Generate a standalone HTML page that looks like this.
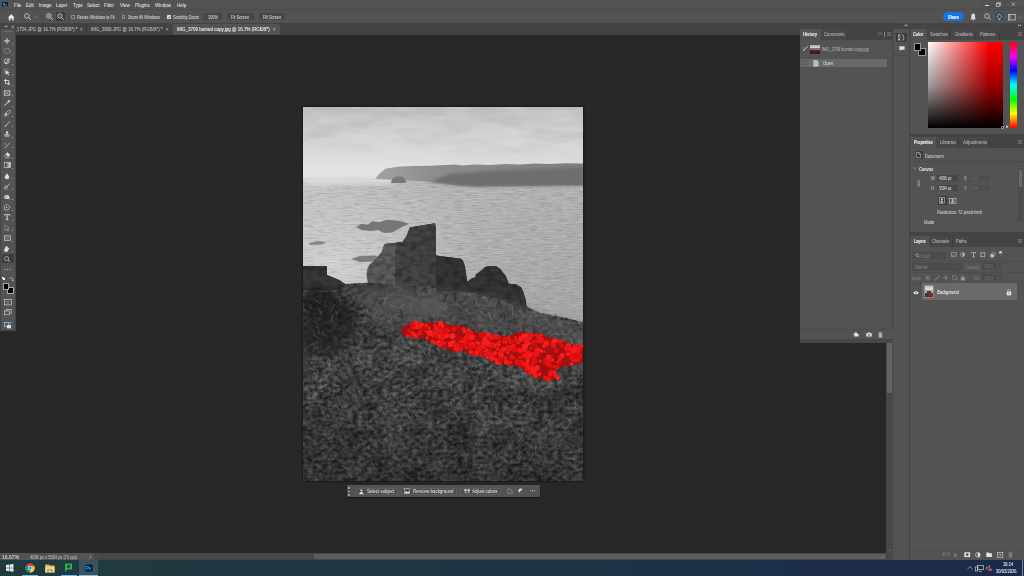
<!DOCTYPE html>
<html><head><meta charset="utf-8">
<style>
*{box-sizing:border-box;margin:0;padding:0}
html,body{width:1024px;height:576px;overflow:hidden;background:#282828;font-family:"Liberation Sans",sans-serif;color:#d6d6d6}
.a{position:absolute}
.t{position:absolute;white-space:nowrap}
svg{position:absolute;overflow:visible}
</style></head><body>
<div class="a" style="left:0px;top:0px;width:1024px;height:8.7px;background:#535353;"></div>
<div class="a" style="left:0px;top:8.7px;width:1024px;height:1px;background:#4a4a4a;"></div>
<div class="a" style="left:2px;top:2px;width:6.2px;height:5.4px;background:#001e36;border-radius:1px"></div>
<div class="t" style="left:2.9px;top:3px;font-size:4.42px;line-height:5.08px;color:#31a8ff;font-weight:bold;transform:scaleX(0.7466);transform-origin:0 0;-webkit-text-stroke:0.08px #31a8ff;">Ps</div>
<div class="t" style="left:13.75px;top:2px;font-size:5.23px;line-height:6.01px;color:#dedede;transform:scaleX(0.8700);transform-origin:0 0;-webkit-text-stroke:0.08px #dedede;">File</div>
<div class="t" style="left:25.75px;top:2px;font-size:5.23px;line-height:6.01px;color:#dedede;transform:scaleX(0.8700);transform-origin:0 0;-webkit-text-stroke:0.08px #dedede;">Edit</div>
<div class="t" style="left:38.75px;top:2px;font-size:5.23px;line-height:6.01px;color:#dedede;transform:scaleX(0.8700);transform-origin:0 0;-webkit-text-stroke:0.08px #dedede;">Image</div>
<div class="t" style="left:56.45px;top:2px;font-size:5.23px;line-height:6.01px;color:#dedede;transform:scaleX(0.8700);transform-origin:0 0;-webkit-text-stroke:0.08px #dedede;">Layer</div>
<div class="t" style="left:72.55px;top:2px;font-size:5.23px;line-height:6.01px;color:#dedede;transform:scaleX(0.8700);transform-origin:0 0;-webkit-text-stroke:0.08px #dedede;">Type</div>
<div class="t" style="left:87.25px;top:2px;font-size:5.23px;line-height:6.01px;color:#dedede;transform:scaleX(0.8700);transform-origin:0 0;-webkit-text-stroke:0.08px #dedede;">Select</div>
<div class="t" style="left:104.25px;top:2px;font-size:5.23px;line-height:6.01px;color:#dedede;transform:scaleX(0.8700);transform-origin:0 0;-webkit-text-stroke:0.08px #dedede;">Filter</div>
<div class="t" style="left:119.55px;top:2px;font-size:5.23px;line-height:6.01px;color:#dedede;transform:scaleX(0.8700);transform-origin:0 0;-webkit-text-stroke:0.08px #dedede;">View</div>
<div class="t" style="left:134.55px;top:2px;font-size:5.23px;line-height:6.01px;color:#dedede;transform:scaleX(0.8700);transform-origin:0 0;-webkit-text-stroke:0.08px #dedede;">Plugins</div>
<div class="t" style="left:154.55px;top:2px;font-size:5.23px;line-height:6.01px;color:#dedede;transform:scaleX(0.8700);transform-origin:0 0;-webkit-text-stroke:0.08px #dedede;">Window</div>
<div class="t" style="left:176.75px;top:2px;font-size:5.23px;line-height:6.01px;color:#dedede;transform:scaleX(0.8700);transform-origin:0 0;-webkit-text-stroke:0.08px #dedede;">Help</div>
<div class="a" style="left:981.5px;top:0px;width:0.6px;height:7.6px;background:#4c4c4c;"></div>
<div class="a" style="left:992.5px;top:0px;width:0.6px;height:7.6px;background:#4c4c4c;"></div>
<div class="a" style="left:1003.5px;top:0px;width:0.6px;height:7.6px;background:#4c4c4c;"></div>
<div class="a" style="left:981.5px;top:7px;width:41px;height:0.6px;background:#4c4c4c;"></div>
<div class="a" style="left:985px;top:4.6px;width:4px;height:0.8px;background:#ddd;"></div>
<svg style="left:996px;top:1.8px" width="6" height="5" viewBox="0 0 6 5"><rect x="0.6" y="1.6" width="3" height="3" fill="none" stroke="#ddd" stroke-width="0.6"/><path d="M1.6 1.6V0.6H4.6V3.6H3.6" fill="none" stroke="#ddd" stroke-width="0.6"/></svg>
<svg style="left:1011.2px;top:2px" width="5" height="5" viewBox="0 0 5 5"><path d="M0.5 0.5L4 4M4 0.5L0.5 4" stroke="#ddd" stroke-width="0.6"/></svg>
<div class="a" style="left:0px;top:9.7px;width:1024px;height:13.3px;background:#535353;"></div>
<svg style="left:7.9px;top:13.5px" width="7" height="7" viewBox="0 0 7 7"><path d="M3.25 0.2L6.6 3.4H5.6V6.5H4.1V4.5H2.4V6.5H0.9V3.4H-0.1Z" fill="#ececec"/></svg>
<div class="a" style="left:21.5px;top:10.7px;width:0.7px;height:11px;background:#4a4a4a;"></div>
<div class="a" style="left:41.5px;top:10.7px;width:0.7px;height:11px;background:#4a4a4a;"></div>
<div class="a" style="left:67.5px;top:10.7px;width:0.7px;height:11px;background:#4a4a4a;"></div>
<svg style="left:24px;top:13px" width="8" height="8" viewBox="0 0 8 8"><circle cx="2.9" cy="2.9" r="2.3" fill="none" stroke="#dcdcdc" stroke-width="0.75"/><path d="M4.5 4.5L6.8 6.8" stroke="#dcdcdc" stroke-width="0.9"/></svg>
<svg style="left:34.8px;top:16px" width="4" height="3" viewBox="0 0 4 3"><path d="M0.3 0.4L1.7 1.8L3.1 0.4" fill="none" stroke="#aaa" stroke-width="0.5"/></svg>
<svg style="left:46px;top:13px" width="8" height="8" viewBox="0 0 8 8"><circle cx="2.9" cy="2.9" r="2.3" fill="none" stroke="#dcdcdc" stroke-width="0.75"/><path d="M4.5 4.5L6.8 6.8" stroke="#dcdcdc" stroke-width="0.9"/><path d="M1.7 2.9H4.1M2.9 1.7V4.1" stroke="#dcdcdc" stroke-width="0.5"/></svg>
<div class="a" style="left:56.1px;top:12px;width:8.8px;height:9.2px;background:#3b3b3b;border-radius:1px"></div>
<svg style="left:57px;top:13px" width="8" height="8" viewBox="0 0 8 8"><circle cx="2.9" cy="2.9" r="2.3" fill="none" stroke="#dcdcdc" stroke-width="0.75"/><path d="M4.5 4.5L6.8 6.8" stroke="#dcdcdc" stroke-width="0.9"/><path d="M1.7 2.9H4.1" stroke="#dcdcdc" stroke-width="0.5"/></svg>
<div class="a" style="left:71.4px;top:14.8px;width:3.8px;height:3.8px;background:transparent;border:0.55px solid #8c8c8c;border-radius:0.6px"></div>
<div class="t" style="left:77px;top:15px;font-size:4.42px;line-height:5.08px;color:#cfcfcf;transform:scaleX(0.8643);transform-origin:0 0;-webkit-text-stroke:0.08px #cfcfcf;">Resize Windows to Fit</div>
<div class="a" style="left:121.6px;top:14.8px;width:3.8px;height:3.8px;background:transparent;border:0.55px solid #8c8c8c;border-radius:0.6px"></div>
<div class="t" style="left:128px;top:15px;font-size:4.46px;line-height:5.13px;color:#cfcfcf;transform:scaleX(0.8700);transform-origin:0 0;-webkit-text-stroke:0.08px #cfcfcf;">Zoom All Windows</div>
<div class="a" style="left:166.9px;top:14.6px;width:4.2px;height:4.2px;background:#e4e4e4;border-radius:0.6px"></div>
<svg style="left:166.9px;top:14.6px" width="5" height="5" viewBox="0 0 5 5"><path d="M0.9 2.2L1.9 3.2L3.4 1.1" fill="none" stroke="#3a3a3a" stroke-width="0.65"/></svg>
<div class="t" style="left:173px;top:15px;font-size:4.6px;line-height:5.29px;color:#cfcfcf;transform:scaleX(0.8696);transform-origin:0 0;-webkit-text-stroke:0.08px #cfcfcf;">Scrubby Zoom</div>
<div class="a" style="left:203.4px;top:12.8px;width:18.400000000000006px;height:7.3px;background:#474747;border-radius:1px"></div>
<div class="t" style="left:208.2px;top:15px;font-size:4.45px;line-height:5.12px;color:#cfcfcf;transform:scaleX(0.8697);transform-origin:0 0;-webkit-text-stroke:0.08px #cfcfcf;">100%</div>
<div class="a" style="left:227px;top:12.8px;width:26.69999999999999px;height:7.3px;background:#474747;border-radius:1px"></div>
<div class="t" style="left:231.1px;top:15px;font-size:4.57px;line-height:5.26px;color:#cfcfcf;transform:scaleX(0.8687);transform-origin:0 0;-webkit-text-stroke:0.08px #cfcfcf;">Fit Screen</div>
<div class="a" style="left:258.5px;top:12.8px;width:26.30000000000001px;height:7.3px;background:#474747;border-radius:1px"></div>
<div class="t" style="left:262.9px;top:15px;font-size:4.42px;line-height:5.08px;color:#cfcfcf;transform:scaleX(0.8665);transform-origin:0 0;-webkit-text-stroke:0.08px #cfcfcf;">Fill Screen</div>
<div class="a" style="left:943.1px;top:11.7px;width:21.3px;height:9.6px;background:#1473e6;border-radius:4.8px"></div>
<div class="t" style="left:948.2px;top:15px;font-size:4.55px;line-height:5.23px;color:#ffffff;font-weight:bold;transform:scaleX(0.8703);transform-origin:0 0;-webkit-text-stroke:0.08px #ffffff;">Share</div>
<svg style="left:970.3px;top:12.6px" width="7" height="8" viewBox="0 0 7 8"><path d="M3.2 0.4C1.9 0.4 1.3 1.5 1.3 2.8V4.9L0.2 6.2H6.2L5.1 4.9V2.8C5.1 1.5 4.5 0.4 3.2 0.4Z" fill="#dadada"/><circle cx="3.2" cy="6.8" r="0.8" fill="#dadada"/></svg>
<svg style="left:983.8px;top:13.1px" width="8" height="8" viewBox="0 0 8 8"><circle cx="3" cy="3" r="2.3" fill="none" stroke="#dadada" stroke-width="0.7"/><path d="M4.7 4.7L6.6 6.6" stroke="#dadada" stroke-width="0.8"/></svg>
<div class="a" style="left:994px;top:11.2px;width:10.8px;height:10.8px;background:#404040;border:1px solid #2566c4;border-radius:50%"></div>
<svg style="left:996px;top:12.8px" width="7" height="8" viewBox="0 0 7 8"><path d="M3.4 1.6C2.2 1.6 1.5 2.5 1.5 3.4C1.5 4.2 2.1 4.7 2.5 5.2V6H4.3V5.2C4.7 4.7 5.3 4.2 5.3 3.4C5.3 2.5 4.6 1.6 3.4 1.6Z" fill="none" stroke="#ececec" stroke-width="0.55"/><path d="M2.6 6.5H4.2V7.2H2.6Z" fill="#ececec"/><path d="M3.4 0.2V1M0.9 1.1L1.4 1.6M5.9 1.1L5.4 1.6M0.1 3.4H0.8M6.7 3.4H6" stroke="#ececec" stroke-width="0.45"/></svg>
<svg style="left:1007.5px;top:13.8px" width="8" height="7" viewBox="0 0 8 7"><rect x="0.4" y="0.4" width="6.8" height="5.6" fill="none" stroke="#dadada" stroke-width="0.7"/><rect x="0.8" y="0.8" width="2" height="4.8" fill="#8a8a8a"/></svg>
<svg style="left:1018.6px;top:15.6px" width="4" height="3" viewBox="0 0 4 3"><path d="M0.3 0.4L1.7 1.8L3.1 0.4" fill="none" stroke="#9a9a9a" stroke-width="0.5"/></svg>
<div class="a" style="left:16px;top:23px;width:1008px;height:12px;background:#434343;"></div>
<div class="a" style="left:16px;top:23px;width:70px;height:12px;overflow:hidden">
<div class="t" style="left:-10.46px;top:4px;font-size:5.06px;line-height:5.82px;color:#bcbcbc;transform:scaleX(0.8696);transform-origin:0 0;-webkit-text-stroke:0.08px #bcbcbc;">IMG_1734.JPG @ 16.7% (RGB/8*) *</div>
</div>
<div class="t" style="left:79.6px;top:27px;font-size:5.06px;line-height:5.82px;color:#a0a0a0;transform:scaleX(0.8696);transform-origin:0 0;-webkit-text-stroke:0.08px #a0a0a0;">×</div>
<div class="a" style="left:86.3px;top:23.5px;width:0.7px;height:11.5px;background:#3a3a3a;"></div>
<div class="t" style="left:90.8px;top:27px;font-size:5.06px;line-height:5.82px;color:#bcbcbc;transform:scaleX(0.8696);transform-origin:0 0;-webkit-text-stroke:0.08px #bcbcbc;">IMG_3880.JPG @ 16.7% (RGB/8*) *</div>
<div class="t" style="left:166.2px;top:27px;font-size:5.06px;line-height:5.82px;color:#a0a0a0;transform:scaleX(0.8696);transform-origin:0 0;-webkit-text-stroke:0.08px #a0a0a0;">×</div>
<div class="a" style="left:173.3px;top:23.5px;width:106.7px;height:11.5px;background:#535353;"></div>
<div class="t" style="left:177.1px;top:27px;font-size:5.14px;line-height:5.91px;color:#f2f2f2;transform:scaleX(0.8735);transform-origin:0 0;-webkit-text-stroke:0.08px #f2f2f2;">IMG_3709 burned copy.jpg @ 16.7% (RGB/8*)</div>
<div class="t" style="left:273.4px;top:27px;font-size:5.06px;line-height:5.82px;color:#a8a8a8;transform:scaleX(0.8696);transform-origin:0 0;-webkit-text-stroke:0.08px #a8a8a8;">×</div>
<div class="a" style="left:0px;top:23px;width:16px;height:6px;background:#434343;"></div>
<svg style="left:3.8px;top:24.6px" width="4" height="3" viewBox="0 0 4 3"><path d="M1.6 0.2L0.2 1.4L1.6 2.6ZM3.4 0.2L2 1.4L3.4 2.6Z" fill="#c4c4c4"/></svg>
<svg style="left:10.8px;top:24.8px" width="4" height="4" viewBox="0 0 4 4"><path d="M0.4 0.4L3.2 3.2M3.2 0.4L0.4 3.2" stroke="#cfcfcf" stroke-width="0.6"/></svg>
<div class="a" style="left:0px;top:29px;width:16px;height:302px;background:#535353;border-left:1.2px solid #454545;border-right:0.8px solid #454545;border-bottom:0.8px solid #454545"></div>
<div class="a" style="left:4px;top:30.8px;width:8px;height:0.6px;background:#6a6a6a;"></div>
<svg style="left:4.4px;top:37.5px" width="7" height="7" viewBox="0 0 7 7"><path d="M3 0L4 1.3H3.4V2.6H4.7V2L6 3L4.7 4V3.4H3.4V4.7H4L3 6L2 4.7H2.6V3.4H1.3V4L0 3L1.3 2V2.6H2.6V1.3H2Z" fill="#dedede"/></svg>
<div class="a" style="left:12px;top:43.1px;width:0.8px;height:0.8px;background:#9a9a9a;"></div>
<svg style="left:4.4px;top:47.9px" width="7" height="7" viewBox="0 0 7 7"><ellipse cx="3" cy="3" rx="3.2" ry="2.4" fill="none" stroke="#dedede" stroke-width="0.6" stroke-dasharray="0.9 0.5"/></svg>
<div class="a" style="left:12px;top:53.5px;width:0.8px;height:0.8px;background:#9a9a9a;"></div>
<svg style="left:4.4px;top:58.3px" width="7" height="7" viewBox="0 0 7 7"><circle cx="2.6" cy="3.4" r="2.4" fill="none" stroke="#dedede" stroke-width="0.7"/><path d="M1.5 5.5L5.8 0.3" stroke="#dedede" stroke-width="0.9"/><path d="M0.6 4 A2.4 2.4 0 0 0 3.5 5.6Z" fill="#dedede"/></svg>
<div class="a" style="left:12px;top:63.9px;width:0.8px;height:0.8px;background:#9a9a9a;"></div>
<svg style="left:4.4px;top:68.7px" width="7" height="7" viewBox="0 0 7 7"><rect x="0" y="0" width="4" height="4" fill="none" stroke="#9a9a9a" stroke-width="0.5"/><path d="M1.2 1.2L5.8 3.6L3.8 4.1L5.4 6L4.6 6.4L3.2 4.5L1.9 5.8Z" fill="#dedede"/></svg>
<div class="a" style="left:12px;top:74.3px;width:0.8px;height:0.8px;background:#9a9a9a;"></div>
<svg style="left:4.4px;top:79.1px" width="7" height="7" viewBox="0 0 7 7"><path d="M1.5 0V4.7H6M0 1.5H4.7V6" fill="none" stroke="#dedede" stroke-width="0.9"/></svg>
<div class="a" style="left:12px;top:84.7px;width:0.8px;height:0.8px;background:#9a9a9a;"></div>
<svg style="left:4.4px;top:89.5px" width="7" height="7" viewBox="0 0 7 7"><rect x="0.3" y="0.8" width="5.6" height="4.4" fill="none" stroke="#dedede" stroke-width="0.7"/><path d="M0.3 0.8L5.9 5.2M5.9 0.8L0.3 5.2" stroke="#dedede" stroke-width="0.5"/></svg>
<div class="a" style="left:12px;top:95.1px;width:0.8px;height:0.8px;background:#9a9a9a;"></div>
<svg style="left:4.4px;top:99.9px" width="7" height="7" viewBox="0 0 7 7"><path d="M0.6 5.6L4.2 2" stroke="#dedede" stroke-width="1"/><path d="M3.4 1.6L4.6 0.4C5 0 5.6 0 5.9 0.3C6.2 0.6 6.2 1.2 5.8 1.6L4.6 2.8Z" fill="#dedede"/></svg>
<div class="a" style="left:12px;top:105.5px;width:0.8px;height:0.8px;background:#9a9a9a;"></div>
<svg style="left:4.4px;top:110.3px" width="7" height="7" viewBox="0 0 7 7"><path d="M0.7 4.3L4.3 0.7C4.8 0.2 5.6 0.2 6 0.7C6.4 1.1 6.4 1.9 5.9 2.4L2.4 5.9C1.9 6.4 1.1 6.4 0.7 6C0.2 5.6 0.2 4.8 0.7 4.3Z" fill="none" stroke="#dedede" stroke-width="0.6"/><path d="M0.9 4.6L2.4 3.1L3.3 4L1.8 5.5Z" fill="#dedede"/></svg>
<div class="a" style="left:12px;top:115.9px;width:0.8px;height:0.8px;background:#9a9a9a;"></div>
<svg style="left:4.4px;top:120.7px" width="7" height="7" viewBox="0 0 7 7"><path d="M0.5 5.8C0.6 4.9 1 4.6 1.6 4.6L5.8 0.2L6.2 0.6L2 5C2 5.6 1.6 6 0.5 5.8Z" fill="#dedede"/></svg>
<div class="a" style="left:12px;top:126.3px;width:0.8px;height:0.8px;background:#9a9a9a;"></div>
<svg style="left:4.4px;top:131.1px" width="7" height="7" viewBox="0 0 7 7"><circle cx="3" cy="1.4" r="1.2" fill="#dedede"/><path d="M2.5 2.4H3.5V3.4H5.8V4.6H0.2V3.4H2.5Z M0.6 5.2H5.4V5.8H0.6Z" fill="#dedede"/></svg>
<div class="a" style="left:12px;top:136.7px;width:0.8px;height:0.8px;background:#9a9a9a;"></div>
<svg style="left:4.4px;top:141.5px" width="7" height="7" viewBox="0 0 7 7"><path d="M0.8 5.8C0.9 5 1.2 4.7 1.8 4.7L5.6 0.4L6 0.8L2.2 5.1C2.2 5.6 1.8 6 0.8 5.8Z" fill="#dedede"/><path d="M0.3 1.5L2 2.3" stroke="#dedede" stroke-width="0.6"/></svg>
<div class="a" style="left:12px;top:147.1px;width:0.8px;height:0.8px;background:#9a9a9a;"></div>
<svg style="left:4.4px;top:151.9px" width="7" height="7" viewBox="0 0 7 7"><path d="M3.5 0.6L5.8 2.9L3 5.7H1.6L0.3 4.4Z" fill="none" stroke="#dedede" stroke-width="0.6"/><path d="M3.5 0.6L5.8 2.9L4 4.7L1.7 2.4Z" fill="#dedede"/><path d="M3 5.7H6" stroke="#dedede" stroke-width="0.5"/></svg>
<div class="a" style="left:12px;top:157.5px;width:0.8px;height:0.8px;background:#9a9a9a;"></div>
<svg style="left:4.4px;top:162.3px" width="7" height="7" viewBox="0 0 7 7"><defs><linearGradient id="gg"><stop offset="0" stop-color="#222"/><stop offset="1" stop-color="#ddd"/></linearGradient></defs><rect x="0.3" y="0.6" width="6" height="4.8" fill="url(#gg)" stroke="#dedede" stroke-width="0.6"/></svg>
<div class="a" style="left:12px;top:167.9px;width:0.8px;height:0.8px;background:#9a9a9a;"></div>
<svg style="left:4.4px;top:172.7px" width="7" height="7" viewBox="0 0 7 7"><path d="M3 0.2C3.6 1.4 5.3 3 5.3 4.2C5.3 5.4 4.3 6.2 3 6.2C1.7 6.2 0.7 5.4 0.7 4.2C0.7 3 2.4 1.4 3 0.2Z" fill="#dedede"/></svg>
<div class="a" style="left:12px;top:178.3px;width:0.8px;height:0.8px;background:#9a9a9a;"></div>
<svg style="left:4.4px;top:183.1px" width="7" height="7" viewBox="0 0 7 7"><path d="M2.2 3.8L5.6 0.4L6 0.8L2.6 4.2Z" fill="#dedede"/><circle cx="2" cy="4.6" r="1.4" fill="none" stroke="#dedede" stroke-width="0.6"/><path d="M0.3 5.2L1.5 4" stroke="#dedede" stroke-width="0.7"/></svg>
<div class="a" style="left:12px;top:188.7px;width:0.8px;height:0.8px;background:#9a9a9a;"></div>
<svg style="left:4.4px;top:193.5px" width="7" height="7" viewBox="0 0 7 7"><ellipse cx="2.8" cy="3" rx="2.7" ry="2" fill="#dedede"/><circle cx="2" cy="2.8" r="0.7" fill="#535353"/><path d="M4 4L6.2 5.2" stroke="#dedede" stroke-width="0.7"/></svg>
<div class="a" style="left:12px;top:199.1px;width:0.8px;height:0.8px;background:#9a9a9a;"></div>
<svg style="left:4.4px;top:203.9px" width="7" height="7" viewBox="0 0 7 7"><path d="M3.2 0.3L5.9 3L4.2 5.9L0.3 5.9L0.3 2L3.2 0.3Z" fill="none" stroke="#dedede" stroke-width="0.6"/><circle cx="2.6" cy="3.4" r="0.6" fill="#dedede"/></svg>
<div class="a" style="left:12px;top:209.5px;width:0.8px;height:0.8px;background:#9a9a9a;"></div>
<svg style="left:4.4px;top:214.3px" width="7" height="7" viewBox="0 0 7 7"><path d="M0.3 0.3H5.9V1.7H5.1V1.1H3.6V5.2H4.3V6H1.9V5.2H2.6V1.1H1.1V1.7H0.3Z" fill="#dedede"/></svg>
<div class="a" style="left:12px;top:219.9px;width:0.8px;height:0.8px;background:#9a9a9a;"></div>
<svg style="left:4.4px;top:224.7px" width="7" height="7" viewBox="0 0 7 7"><path d="M1 0.6L5 3.2L3.2 3.6L4.5 5.6L3.7 6L2.5 4.1L1.3 5.3Z" fill="#1e1e1e" stroke="#dedede" stroke-width="0.5"/></svg>
<div class="a" style="left:12px;top:230.3px;width:0.8px;height:0.8px;background:#9a9a9a;"></div>
<svg style="left:4.4px;top:235.1px" width="7" height="7" viewBox="0 0 7 7"><rect x="0.3" y="0.8" width="6" height="4.6" fill="#6a6a6a" stroke="#dedede" stroke-width="0.6"/></svg>
<div class="a" style="left:12px;top:240.7px;width:0.8px;height:0.8px;background:#9a9a9a;"></div>
<svg style="left:4.4px;top:245.5px" width="7" height="7" viewBox="0 0 7 7"><path d="M1 3.5V1.6C1 1.2 1.7 1.2 1.7 1.6V0.9C1.7 0.5 2.4 0.5 2.4 0.9V0.6C2.4 0.2 3.1 0.2 3.1 0.6V0.9C3.1 0.5 3.8 0.5 3.8 0.9V2.6L4.6 1.9C5 1.6 5.5 2 5.2 2.4L3.8 5C3.4 5.8 2.6 6 2 6C0.8 6 0.3 5.2 0.3 4.2V3C0.3 2.6 1 2.6 1 3Z" fill="#dedede"/></svg>
<div class="a" style="left:12px;top:251.1px;width:0.8px;height:0.8px;background:#9a9a9a;"></div>
<div class="a" style="left:2.2px;top:254.2px;width:11.7px;height:8.7px;background:#3c3c3c;"></div>
<svg style="left:4.4px;top:255.9px" width="7" height="7" viewBox="0 0 7 7"><circle cx="2.6" cy="2.6" r="2.1" fill="none" stroke="#dedede" stroke-width="0.6"/><path d="M4.1 4.1L6 6" stroke="#dedede" stroke-width="0.7"/></svg>
<svg style="left:4px;top:268px" width="8" height="3" viewBox="0 0 8 3"><circle cx="1" cy="1.2" r="0.55" fill="#dedede"/><circle cx="3.5" cy="1.2" r="0.55" fill="#dedede"/><circle cx="6" cy="1.2" r="0.55" fill="#dedede"/></svg>
<div class="a" style="left:1.6px;top:277px;width:2.4px;height:2.4px;background:#111;border:0.4px solid #ddd"></div>
<div class="a" style="left:3px;top:278.4px;width:2px;height:2px;background:#fff;"></div>
<svg style="left:9px;top:276.8px" width="5" height="5" viewBox="0 0 5 5"><path d="M0.5 1H2.5C3.3 1 3.8 1.6 3.8 2.4V4" fill="none" stroke="#dedede" stroke-width="0.6"/><path d="M3 3.3L3.8 4.3L4.6 3.3Z" fill="#dedede"/></svg>
<div class="a" style="left:6.5px;top:287px;width:7px;height:7.3px;background:#000;border:0.6px solid #a8a8a8;border-radius:0.5px"></div>
<div class="a" style="left:2.5px;top:283.3px;width:6.5px;height:6.5px;background:#000;border:0.6px solid #a8a8a8;border-radius:0.5px"></div>
<svg style="left:4px;top:298.8px" width="8" height="7" viewBox="0 0 8 7"><rect x="0.3" y="0.3" width="7" height="5.6" fill="none" stroke="#dedede" stroke-width="0.6"/><circle cx="3.8" cy="3.1" r="1.6" fill="#777"/></svg>
<svg style="left:4px;top:308.5px" width="8" height="7" viewBox="0 0 8 7"><rect x="2.2" y="0.3" width="5" height="3.8" fill="none" stroke="#dedede" stroke-width="0.6"/><rect x="0.3" y="2" width="5" height="3.8" fill="#535353" stroke="#dedede" stroke-width="0.6"/></svg>
<svg style="left:4px;top:320.5px" width="8" height="8" viewBox="0 0 8 8"><rect x="0.5" y="1.5" width="4" height="4" fill="none" stroke="#dedede" stroke-width="0.6"/><rect x="3" y="4" width="4" height="3.4" fill="#dedede"/><circle cx="6.3" cy="1.6" r="1.4" fill="#2d8ceb"/></svg>
<div class="a" style="left:16px;top:35px;width:870px;height:518px;background:#282828;"></div>
<div class="a" style="left:303px;top:107px;width:280px;height:374px;background:#222;box-shadow:0 0 1.5px 0.8px #1a1a1a"></div>
<!-- photo -->
<svg class="a" style="left:303px;top:107px;overflow:hidden" width="280" height="374" viewBox="0 0 280 374">
<defs>
<linearGradient id="sky" x1="0" y1="0" x2="0" y2="1">
<stop offset="0" stop-color="#c0c0c0"/><stop offset="0.2" stop-color="#cdcdcd"/><stop offset="0.5" stop-color="#d8d8d8"/><stop offset="0.85" stop-color="#dfdfdf"/><stop offset="1" stop-color="#dcdcdc"/>
</linearGradient>
<radialGradient id="haze" cx="0.1" cy="0.85" r="0.6">
<stop offset="0" stop-color="#e6e6e6" stop-opacity="0.9"/><stop offset="1" stop-color="#e6e6e6" stop-opacity="0"/>
</radialGradient>
<linearGradient id="sea" x1="0" y1="0" x2="0.4" y2="1">
<stop offset="0" stop-color="#c2c2c2"/><stop offset="0.12" stop-color="#b6b6b6"/><stop offset="0.5" stop-color="#acacac"/><stop offset="1" stop-color="#9e9e9e"/>
</linearGradient>
<radialGradient id="refl" cx="0.1" cy="0.45" r="0.55">
<stop offset="0" stop-color="#dadada" stop-opacity="0.75"/><stop offset="1" stop-color="#dadada" stop-opacity="0"/>
</radialGradient>
<linearGradient id="shade" x1="0" y1="0" x2="0" y2="1">
<stop offset="0" stop-color="#000" stop-opacity="0"/><stop offset="0.3" stop-color="#fff" stop-opacity="0.03"/><stop offset="0.55" stop-color="#000" stop-opacity="0.02"/><stop offset="1" stop-color="#000" stop-opacity="0.2"/>
</linearGradient>
<filter id="grassf" x="0" y="0" width="100%" height="100%" color-interpolation-filters="sRGB">
<feTurbulence type="fractalNoise" baseFrequency="0.2 0.28" numOctaves="3" seed="4"/>
<feColorMatrix type="matrix" values="0.9 0 0 0 -0.2  0.9 0 0 0 -0.2  0.9 0 0 0 -0.2  0 0 0 0 1"/>
</filter>
<filter id="rockf" x="0" y="0" width="100%" height="100%" color-interpolation-filters="sRGB">
<feTurbulence type="fractalNoise" baseFrequency="0.12 0.2" numOctaves="3" seed="12"/>
<feColorMatrix type="matrix" values="0 0 0 0 0  0 0 0 0 0  0 0 0 0 0  1.2 0 0 0 -0.45"/>
</filter>
<filter id="nw" x="0" y="0" width="100%" height="100%" color-interpolation-filters="sRGB">
<feTurbulence type="fractalNoise" baseFrequency="0.12 0.9" numOctaves="2" seed="2"/>
<feColorMatrix type="matrix" values="0 0 0 0 1  0 0 0 0 1  0 0 0 0 1  1.2 0 0 0 -0.55"/>
</filter>
<filter id="nw2" x="0" y="0" width="100%" height="100%" color-interpolation-filters="sRGB">
<feTurbulence type="fractalNoise" baseFrequency="0.08 0.8" numOctaves="2" seed="5"/>
<feColorMatrix type="matrix" values="0 0 0 0 0  0 0 0 0 0  0 0 0 0 0  1.0 0 0 0 -0.5"/>
</filter>
<filter id="nc" x="0" y="0" width="100%" height="100%" color-interpolation-filters="sRGB">
<feTurbulence type="fractalNoise" baseFrequency="0.018 0.08" numOctaves="3" seed="7"/>
<feColorMatrix type="matrix" values="0 0 0 0 0.62  0 0 0 0 0.62  0 0 0 0 0.62  1.6 0 0 0 -0.62"/>
</filter>
<filter id="nc2" x="0" y="0" width="100%" height="100%" color-interpolation-filters="sRGB">
<feTurbulence type="fractalNoise" baseFrequency="0.03 0.12" numOctaves="3" seed="21"/>
<feColorMatrix type="matrix" values="0 0 0 0 0.9  0 0 0 0 0.9  0 0 0 0 0.9  1.5 0 0 0 -0.68"/>
</filter>
<filter id="blotch" x="0" y="0" width="100%" height="100%" color-interpolation-filters="sRGB">
<feTurbulence type="fractalNoise" baseFrequency="0.035 0.05" numOctaves="2" seed="31"/>
<feColorMatrix type="matrix" values="0 0 0 0 0  0 0 0 0 0  0 0 0 0 0  -2.2 0 0 0 1.35"/>
</filter>
<filter id="blotchl" x="0" y="0" width="100%" height="100%" color-interpolation-filters="sRGB">
<feTurbulence type="fractalNoise" baseFrequency="0.03 0.045" numOctaves="2" seed="44"/>
<feColorMatrix type="matrix" values="0 0 0 0 1  0 0 0 0 1  0 0 0 0 1  2.0 0 0 0 -1.1"/>
</filter>
<linearGradient id="headg" x1="0" y1="0" x2="1" y2="0">
<stop offset="0" stop-color="#a2a2a2"/><stop offset="0.3" stop-color="#8c8c8c"/><stop offset="1" stop-color="#7e7e7e"/>
</linearGradient>
<linearGradient id="fadeg" x1="0" y1="0" x2="0" y2="1"><stop offset="0" stop-color="#fff"/><stop offset="0.5" stop-color="#fff"/><stop offset="1" stop-color="#000"/></linearGradient>
<mask id="mfade" maskUnits="userSpaceOnUse" x="0" y="0" width="280" height="60"><rect x="0" y="0" width="280" height="60" fill="url(#fadeg)"/></mask>
<filter id="bl"><feGaussianBlur stdDeviation="0.6"/></filter>
<filter id="bl2"><feGaussianBlur stdDeviation="1.5"/></filter>
<filter id="bl3"><feGaussianBlur stdDeviation="3"/></filter>
<clipPath id="cland"><polygon points="0.0,159.0 24.0,159.0 24.0,168.0 36.0,173.0 42.0,177.0 65.0,175.7 66.0,158.0 70.0,155.0 78.7,145.5 81.8,137.0 99.5,135.0 103.7,128.8 106.8,120.5 124.5,117.4 131.8,116.3 133.0,120.5 133.0,148.6 142.2,149.7 150.5,150.7 160.0,153.8 163.0,166.0 164.0,174.7 172.4,170.5 174.5,166.3 182.8,160.0 191.0,159.0 197.4,162.0 202.6,168.4 205.8,176.8 214.0,177.8 220.3,185.0 223.5,199.7 237.0,206.0 257.0,210.0 280.0,215.0 280.0,374.0 0.0,374.0"/></clipPath>
<clipPath id="crock"><polygon points="92.0,136.0 99.5,135.0 103.7,128.8 106.8,120.5 124.5,117.4 131.8,116.3 133.0,120.5 133.0,179.0 92.0,179.0"/><polygon points="133.0,148.6 142.2,149.7 150.5,150.7 158.0,151.5 160.0,153.8 162.0,159.0 163.0,166.0 164.0,174.7 169.0,171.0 172.4,170.5 173.0,167.0 175.0,166.3 181.0,161.0 182.8,159.5 191.0,159.0 194.0,159.5 197.4,162.0 200.0,167.0 202.6,168.4 204.0,173.0 205.8,176.8 210.0,177.0 214.0,177.8 218.0,180.0 220.3,185.0 223.0,193.0 223.5,199.0 197.0,193.0 167.0,185.0 133.0,183.0"/><polygon points="65.0,175.7 63.5,169.0 64.0,163.0 66.0,158.5 70.0,155.0 75.0,150.0 78.7,145.5 80.0,140.0 81.8,137.0 93.0,136.0 91.0,177.0"/><polygon points="0.0,159.0 24.0,159.0 24.0,168.0 36.0,173.0 42.0,177.0 37.0,183.0 0.0,183.0"/></clipPath>
</defs>
<rect x="0" y="0" width="280" height="80" fill="url(#sky)"/>
<g mask="url(#mfade)"><rect x="0" y="0" width="280" height="60" filter="url(#nc)" opacity="0.45"/>
<rect x="0" y="0" width="280" height="60" filter="url(#nc2)" opacity="0.45"/></g>
<rect x="0" y="20" width="280" height="60" fill="url(#haze)"/>
<rect x="0" y="71" width="280" height="260" fill="url(#sea)"/>
<rect x="0" y="71" width="280" height="200" fill="url(#refl)"/>
<rect x="0" y="71" width="280" height="260" filter="url(#nw)" opacity="0.45"/>
<rect x="0" y="71" width="280" height="260" filter="url(#nw2)" opacity="0.35"/>
<rect x="0" y="68" width="90" height="10" fill="#dedede" filter="url(#bl3)" opacity="0.9"/>
<polygon points="72.0,72.0 77.0,66.0 83.0,61.5 97.0,59.5 112.0,59.0 127.0,58.8 142.0,58.0 152.0,57.6 159.0,58.5 172.0,57.5 187.0,58.0 202.0,57.0 217.0,57.6 232.0,56.5 247.0,57.0 262.0,56.2 280.0,56.5 280.0,78.5 257.0,78.0 217.0,79.0 177.0,79.5 159.0,79.0 142.0,76.5 117.0,74.0 97.0,73.0" fill="url(#headg)" filter="url(#bl)"/>
<polygon points="127.0,75.0 147.0,67.0 197.0,63.0 237.0,62.0 280.0,60.0 280.0,78.5 237.0,79.0 177.0,79.5 159.0,79.0" fill="#6e6e6e" filter="url(#bl2)"/>
<polygon points="88.0,76.0 89.0,72.0 93.0,69.5 99.0,69.5 102.0,72.0 103.0,76.0" fill="#787878" filter="url(#bl)"/>
<polygon points="53.0,120.0 58.0,117.0 65.0,117.5 69.0,114.5 77.0,115.0 83.0,113.0 93.0,113.5 101.0,115.0 106.0,117.0 101.0,119.0 95.0,122.0 89.0,125.5 81.0,126.0 75.0,123.0 67.0,124.0 59.0,123.0" fill="#767676" filter="url(#bl)"/>
<polygon points="48.0,152.0 57.0,149.0 72.0,148.5 78.0,151.0 75.0,154.5 57.0,155.0" fill="#7c7c7c" filter="url(#bl)"/>
<polygon points="6.0,136.0 15.0,134.0 24.0,135.0 19.0,137.5 7.0,138.0" fill="#888" filter="url(#bl)"/>
<g clip-path="url(#cland)">
<rect x="0" y="110" width="280" height="264" filter="url(#grassf)"/>
<rect x="0" y="110" width="280" height="264" fill="#464646" opacity="0.5"/>
<rect x="0" y="170" width="280" height="204" filter="url(#blotch)" opacity="0.35"/>
<rect x="0" y="170" width="280" height="204" filter="url(#blotchl)" opacity="0.12"/>
</g>
<polygon points="92.0,136.0 99.5,135.0 103.7,128.8 106.8,120.5 124.5,117.4 131.8,116.3 133.0,120.5 133.0,179.0 92.0,179.0" fill="#454545"/>
<polygon points="133.0,148.6 142.2,149.7 150.5,150.7 158.0,151.5 160.0,153.8 162.0,159.0 163.0,166.0 164.0,174.7 169.0,171.0 172.4,170.5 173.0,167.0 175.0,166.3 181.0,161.0 182.8,159.5 191.0,159.0 194.0,159.5 197.4,162.0 200.0,167.0 202.6,168.4 204.0,173.0 205.8,176.8 210.0,177.0 214.0,177.8 218.0,180.0 220.3,185.0 223.0,193.0 223.5,199.0 197.0,193.0 167.0,185.0 133.0,183.0" fill="#363636"/>
<polygon points="0.0,159.0 24.0,159.0 24.0,168.0 36.0,173.0 42.0,177.0 37.0,183.0 0.0,183.0" fill="#383838"/>
<polygon points="65.0,175.7 63.5,169.0 64.0,163.0 66.0,158.5 70.0,155.0 75.0,150.0 78.7,145.5 80.0,140.0 81.8,137.0 93.0,136.0 91.0,177.0" fill="#5e5e5e"/>
<g clip-path="url(#crock)"><rect x="0" y="110" width="280" height="90" filter="url(#rockf)" opacity="0.6"/></g>
<polygon points="57.0,185.0 77.0,180.0 137.0,183.0 197.0,191.0 222.0,199.0 242.0,208.0 280.0,217.0 280.0,238.0 237.0,227.0 167.0,221.0 127.0,213.0 97.0,217.0 72.0,215.0 62.0,203.0" fill="#545454" opacity="0.5" filter="url(#bl3)"/>
<polygon points="37.0,181.0 65.0,177.0 92.0,179.0 117.0,180.0 122.0,186.0 97.0,189.0 67.0,190.0 45.0,188.0" fill="#505050" opacity="0.35" filter="url(#bl2)"/>
<polygon points="82.0,193.0 97.0,189.0 127.0,190.0 142.0,195.0 145.0,205.0 127.0,208.0 97.0,206.0 85.0,201.0" fill="#5e5e5e" opacity="0.5" filter="url(#bl2)"/>
<polygon points="0.0,185.0 5.0,180.0 11.0,183.0 15.0,178.0 21.0,184.0 27.0,182.0 32.0,188.0 38.0,189.0 43.0,196.0 49.0,201.0 53.0,211.0 54.0,223.0 49.0,235.0 41.0,243.0 32.0,245.0 22.0,249.0 12.0,248.0 0.0,251.0" fill="#161616" opacity="0.65" filter="url(#bl3)"/>
<g opacity="0.7"><path d="M174.4 327.3Q178.8 325.4 181.3 323.6" stroke="#8a8a8a" stroke-width="0.55" fill="none"/><path d="M235.3 333.4Q231.9 332.4 231.3 331.4" stroke="#6a6a6a" stroke-width="0.55" fill="none"/><path d="M131.3 237.6Q130.0 234.5 132.5 231.5" stroke="#777" stroke-width="0.55" fill="none"/><path d="M114.3 226.0Q114.2 222.0 112.1 218.0" stroke="#8a8a8a" stroke-width="0.55" fill="none"/><path d="M38.9 304.8Q38.6 304.1 35.3 303.5" stroke="#777" stroke-width="0.55" fill="none"/><path d="M216.6 366.8Q214.4 365.4 213.7 364.0" stroke="#777" stroke-width="0.55" fill="none"/><path d="M151.0 315.7Q153.6 314.7 154.7 313.7" stroke="#999" stroke-width="0.55" fill="none"/><path d="M83.7 258.4Q80.4 257.1 80.6 255.8" stroke="#6a6a6a" stroke-width="0.55" fill="none"/><path d="M228.9 299.1Q228.7 296.2 232.1 293.3" stroke="#6a6a6a" stroke-width="0.55" fill="none"/><path d="M229.2 280.0Q229.9 277.6 229.0 275.1" stroke="#8a8a8a" stroke-width="0.55" fill="none"/><path d="M71.7 363.0Q69.9 358.9 68.8 354.8" stroke="#999" stroke-width="0.55" fill="none"/><path d="M102.5 297.7Q99.9 297.0 99.8 296.3" stroke="#777" stroke-width="0.55" fill="none"/><path d="M33.3 237.5Q33.0 233.6 32.6 229.7" stroke="#6a6a6a" stroke-width="0.55" fill="none"/><path d="M217.2 212.6Q221.1 209.8 222.1 207.0" stroke="#8a8a8a" stroke-width="0.55" fill="none"/><path d="M121.2 370.1Q120.8 368.0 121.4 365.8" stroke="#777" stroke-width="0.55" fill="none"/><path d="M95.2 360.3Q93.1 357.5 92.4 354.7" stroke="#777" stroke-width="0.55" fill="none"/><path d="M223.7 306.5Q221.9 303.2 220.4 299.9" stroke="#8a8a8a" stroke-width="0.55" fill="none"/><path d="M22.7 301.7Q19.7 299.9 14.9 298.2" stroke="#6a6a6a" stroke-width="0.55" fill="none"/><path d="M231.4 275.5Q230.6 274.2 226.5 272.9" stroke="#8a8a8a" stroke-width="0.55" fill="none"/><path d="M224.5 253.5Q226.7 252.7 228.4 251.9" stroke="#777" stroke-width="0.55" fill="none"/><path d="M176.5 335.6Q174.8 333.8 175.9 332.0" stroke="#999" stroke-width="0.55" fill="none"/><path d="M82.5 275.0Q87.9 272.1 89.4 269.2" stroke="#999" stroke-width="0.55" fill="none"/><path d="M268.8 317.7Q267.4 315.6 266.3 313.5" stroke="#777" stroke-width="0.55" fill="none"/><path d="M31.5 341.8Q31.1 339.6 27.1 337.4" stroke="#6a6a6a" stroke-width="0.55" fill="none"/><path d="M50.4 282.0Q50.8 279.0 51.1 276.0" stroke="#8a8a8a" stroke-width="0.55" fill="none"/><path d="M220.1 333.3Q222.5 330.0 222.9 326.7" stroke="#6a6a6a" stroke-width="0.55" fill="none"/><path d="M156.6 314.0Q156.4 310.6 152.3 307.2" stroke="#6a6a6a" stroke-width="0.55" fill="none"/><path d="M267.9 254.6Q269.4 253.2 271.0 251.9" stroke="#6a6a6a" stroke-width="0.55" fill="none"/><path d="M91.3 242.5Q91.9 240.2 91.3 237.8" stroke="#6a6a6a" stroke-width="0.55" fill="none"/><path d="M97.4 309.6Q99.5 307.0 102.7 304.4" stroke="#777" stroke-width="0.55" fill="none"/><path d="M243.6 317.6Q247.6 315.6 251.5 313.7" stroke="#777" stroke-width="0.55" fill="none"/><path d="M55.6 258.5Q51.9 255.0 51.5 251.5" stroke="#999" stroke-width="0.55" fill="none"/><path d="M48.1 334.2Q49.1 331.3 50.7 328.3" stroke="#6a6a6a" stroke-width="0.55" fill="none"/><path d="M201.7 198.0Q202.0 196.0 201.1 194.1" stroke="#777" stroke-width="0.55" fill="none"/><path d="M212.5 225.7Q217.8 224.3 219.3 223.0" stroke="#777" stroke-width="0.55" fill="none"/><path d="M15.2 217.2Q12.2 215.4 11.7 213.7" stroke="#8a8a8a" stroke-width="0.55" fill="none"/><path d="M116.3 256.5Q112.1 254.8 110.3 253.1" stroke="#6a6a6a" stroke-width="0.55" fill="none"/><path d="M0.2 266.4Q-1.9 264.1 -0.8 261.8" stroke="#6a6a6a" stroke-width="0.55" fill="none"/><path d="M270.0 292.5Q268.9 290.4 267.7 288.3" stroke="#6a6a6a" stroke-width="0.55" fill="none"/><path d="M268.3 341.2Q270.8 339.2 272.1 337.2" stroke="#6a6a6a" stroke-width="0.55" fill="none"/><path d="M130.9 221.4Q129.5 218.7 130.6 216.1" stroke="#777" stroke-width="0.55" fill="none"/><path d="M170.4 256.6Q164.9 255.1 162.6 253.7" stroke="#777" stroke-width="0.55" fill="none"/><path d="M91.1 351.6Q92.5 348.5 90.0 345.4" stroke="#999" stroke-width="0.55" fill="none"/><path d="M81.6 369.0Q85.7 367.9 86.4 366.7" stroke="#6a6a6a" stroke-width="0.55" fill="none"/><path d="M207.5 247.4Q207.2 246.6 203.3 245.7" stroke="#6a6a6a" stroke-width="0.55" fill="none"/><path d="M137.7 244.8Q135.8 243.1 133.0 241.3" stroke="#999" stroke-width="0.55" fill="none"/><path d="M68.7 200.2Q68.2 198.4 67.7 196.5" stroke="#6a6a6a" stroke-width="0.55" fill="none"/><path d="M68.2 278.8Q69.5 277.2 68.1 275.6" stroke="#6a6a6a" stroke-width="0.55" fill="none"/><path d="M82.1 303.1Q83.5 300.3 84.1 297.6" stroke="#8a8a8a" stroke-width="0.55" fill="none"/><path d="M4.5 215.8Q6.1 213.8 6.8 211.7" stroke="#8a8a8a" stroke-width="0.55" fill="none"/><path d="M130.0 258.3Q129.0 254.7 131.7 251.1" stroke="#6a6a6a" stroke-width="0.55" fill="none"/><path d="M154.9 317.1Q154.5 315.5 156.5 313.8" stroke="#999" stroke-width="0.55" fill="none"/><path d="M217.9 270.4Q220.0 267.6 221.1 264.8" stroke="#999" stroke-width="0.55" fill="none"/><path d="M240.4 345.3Q242.6 342.6 243.0 340.0" stroke="#6a6a6a" stroke-width="0.55" fill="none"/><path d="M130.2 330.2Q129.1 329.4 125.7 328.5" stroke="#6a6a6a" stroke-width="0.55" fill="none"/><path d="M181.6 278.5Q180.6 276.8 178.0 275.2" stroke="#999" stroke-width="0.55" fill="none"/><path d="M272.4 290.4Q270.9 287.6 273.0 284.8" stroke="#777" stroke-width="0.55" fill="none"/><path d="M74.8 208.4Q75.6 207.6 77.8 206.8" stroke="#999" stroke-width="0.55" fill="none"/><path d="M274.0 373.7Q272.2 372.1 267.6 370.4" stroke="#777" stroke-width="0.55" fill="none"/><path d="M172.1 342.2Q175.6 341.2 175.1 340.1" stroke="#999" stroke-width="0.55" fill="none"/><path d="M41.9 303.5Q40.4 301.7 37.9 299.8" stroke="#8a8a8a" stroke-width="0.55" fill="none"/><path d="M155.5 312.5Q153.9 309.3 151.7 306.1" stroke="#8a8a8a" stroke-width="0.55" fill="none"/><path d="M207.9 352.0Q206.8 350.1 207.2 348.2" stroke="#999" stroke-width="0.55" fill="none"/><path d="M137.1 362.9Q135.6 361.7 132.4 360.4" stroke="#777" stroke-width="0.55" fill="none"/><path d="M159.2 315.7Q161.5 314.6 163.4 313.5" stroke="#777" stroke-width="0.55" fill="none"/><path d="M73.7 292.9Q75.1 291.0 76.3 289.2" stroke="#777" stroke-width="0.55" fill="none"/><path d="M226.2 349.3Q224.0 346.5 224.7 343.8" stroke="#8a8a8a" stroke-width="0.55" fill="none"/><path d="M183.4 208.4Q179.0 206.5 177.5 204.6" stroke="#999" stroke-width="0.55" fill="none"/><path d="M66.8 351.7Q66.8 349.1 64.3 346.4" stroke="#8a8a8a" stroke-width="0.55" fill="none"/><path d="M151.8 262.6Q155.1 260.7 158.9 258.8" stroke="#777" stroke-width="0.55" fill="none"/><path d="M209.9 208.2Q208.6 203.9 209.7 199.7" stroke="#999" stroke-width="0.55" fill="none"/><path d="M99.2 235.5Q99.3 233.1 100.6 230.7" stroke="#999" stroke-width="0.55" fill="none"/><path d="M105.9 323.8Q105.2 321.6 103.4 319.3" stroke="#6a6a6a" stroke-width="0.55" fill="none"/><path d="M144.9 300.3Q146.3 297.6 148.5 294.9" stroke="#8a8a8a" stroke-width="0.55" fill="none"/><path d="M10.4 226.7Q12.1 224.6 10.3 222.6" stroke="#6a6a6a" stroke-width="0.55" fill="none"/><path d="M0.1 278.1Q1.0 274.1 2.5 270.1" stroke="#999" stroke-width="0.55" fill="none"/><path d="M129.3 227.7Q127.8 226.0 123.3 224.2" stroke="#999" stroke-width="0.55" fill="none"/><path d="M42.6 239.0Q40.0 237.4 39.2 235.8" stroke="#777" stroke-width="0.55" fill="none"/><path d="M9.3 355.2Q10.0 353.2 12.2 351.1" stroke="#8a8a8a" stroke-width="0.55" fill="none"/><path d="M192.6 315.0Q193.6 313.6 197.7 312.3" stroke="#6a6a6a" stroke-width="0.55" fill="none"/><path d="M81.5 315.1Q77.6 312.6 76.1 310.1" stroke="#8a8a8a" stroke-width="0.55" fill="none"/><path d="M160.9 311.8Q164.6 310.0 166.6 308.2" stroke="#6a6a6a" stroke-width="0.55" fill="none"/><path d="M51.7 258.4Q53.1 257.8 54.8 257.2" stroke="#777" stroke-width="0.55" fill="none"/><path d="M49.2 230.8Q50.5 229.2 50.0 227.6" stroke="#6a6a6a" stroke-width="0.55" fill="none"/><path d="M1.8 204.0Q-0.9 200.3 0.1 196.5" stroke="#6a6a6a" stroke-width="0.55" fill="none"/><path d="M263.1 322.7Q262.9 321.1 266.0 319.4" stroke="#999" stroke-width="0.55" fill="none"/><path d="M15.1 237.1Q12.9 235.5 14.2 233.9" stroke="#6a6a6a" stroke-width="0.55" fill="none"/><path d="M233.4 273.7Q237.9 271.6 238.8 269.5" stroke="#777" stroke-width="0.55" fill="none"/><path d="M50.2 285.1Q48.8 282.4 50.6 279.7" stroke="#6a6a6a" stroke-width="0.55" fill="none"/><path d="M221.4 208.7Q216.4 205.7 214.9 202.7" stroke="#777" stroke-width="0.55" fill="none"/><path d="M175.0 272.9Q175.6 270.3 174.0 267.8" stroke="#777" stroke-width="0.55" fill="none"/><path d="M203.2 358.3Q204.2 355.8 202.6 353.4" stroke="#777" stroke-width="0.55" fill="none"/><path d="M155.3 218.1Q156.2 215.8 159.0 213.5" stroke="#999" stroke-width="0.55" fill="none"/><path d="M87.6 216.5Q84.9 215.1 85.6 213.7" stroke="#999" stroke-width="0.55" fill="none"/><path d="M271.0 313.6Q269.9 311.3 270.9 308.9" stroke="#777" stroke-width="0.55" fill="none"/><path d="M222.9 352.8Q220.4 350.7 215.7 348.6" stroke="#999" stroke-width="0.55" fill="none"/><path d="M210.6 293.7Q213.2 289.8 213.7 285.9" stroke="#8a8a8a" stroke-width="0.55" fill="none"/><path d="M123.8 340.8Q127.8 339.3 130.0 337.8" stroke="#999" stroke-width="0.55" fill="none"/><path d="M75.0 340.0Q71.1 338.3 70.8 336.7" stroke="#777" stroke-width="0.55" fill="none"/><path d="M38.5 283.1Q36.4 282.1 34.0 281.0" stroke="#8a8a8a" stroke-width="0.55" fill="none"/><path d="M7.7 202.2Q8.5 200.4 6.4 198.6" stroke="#8a8a8a" stroke-width="0.55" fill="none"/><path d="M64.7 270.6Q61.7 268.3 62.6 265.9" stroke="#777" stroke-width="0.55" fill="none"/><path d="M203.5 210.2Q202.1 208.1 199.1 206.0" stroke="#999" stroke-width="0.55" fill="none"/><path d="M214.1 271.7Q212.8 269.1 211.9 266.5" stroke="#777" stroke-width="0.55" fill="none"/><path d="M129.1 271.6Q132.5 269.3 132.5 267.1" stroke="#999" stroke-width="0.55" fill="none"/><path d="M271.5 300.9Q272.4 299.6 274.0 298.3" stroke="#8a8a8a" stroke-width="0.55" fill="none"/><path d="M58.1 193.2Q56.4 189.8 53.0 186.4" stroke="#6a6a6a" stroke-width="0.55" fill="none"/><path d="M110.0 232.0Q108.7 230.3 106.9 228.6" stroke="#6a6a6a" stroke-width="0.55" fill="none"/><path d="M214.1 335.1Q217.1 333.2 217.6 331.3" stroke="#8a8a8a" stroke-width="0.55" fill="none"/><path d="M173.1 265.6Q174.4 264.2 175.9 262.9" stroke="#8a8a8a" stroke-width="0.55" fill="none"/><path d="M26.3 264.9Q26.0 261.6 22.4 258.4" stroke="#6a6a6a" stroke-width="0.55" fill="none"/><path d="M133.6 278.1Q129.8 276.4 128.4 274.7" stroke="#8a8a8a" stroke-width="0.55" fill="none"/><path d="M29.0 302.6Q29.4 300.1 33.7 297.7" stroke="#8a8a8a" stroke-width="0.55" fill="none"/><path d="M170.9 286.0Q172.0 283.0 171.5 280.0" stroke="#999" stroke-width="0.55" fill="none"/><path d="M275.1 340.6Q277.7 336.8 278.9 333.0" stroke="#777" stroke-width="0.55" fill="none"/><path d="M223.6 258.7Q225.1 255.7 226.4 252.7" stroke="#6a6a6a" stroke-width="0.55" fill="none"/><path d="M80.2 197.9Q82.7 194.3 82.2 190.6" stroke="#999" stroke-width="0.55" fill="none"/><path d="M85.9 361.2Q85.4 359.2 88.2 357.2" stroke="#8a8a8a" stroke-width="0.55" fill="none"/><path d="M187.6 366.2Q190.8 362.4 191.3 358.7" stroke="#777" stroke-width="0.55" fill="none"/><path d="M135.3 209.6Q135.7 207.9 133.9 206.2" stroke="#999" stroke-width="0.55" fill="none"/><path d="M110.2 193.5Q108.9 191.6 106.4 189.8" stroke="#777" stroke-width="0.55" fill="none"/><path d="M254.8 304.0Q253.4 302.5 250.5 301.0" stroke="#6a6a6a" stroke-width="0.55" fill="none"/><path d="M69.7 211.1Q72.5 209.3 72.9 207.6" stroke="#8a8a8a" stroke-width="0.55" fill="none"/><path d="M251.2 223.3Q252.2 220.6 255.4 217.9" stroke="#8a8a8a" stroke-width="0.55" fill="none"/><path d="M159.6 306.4Q159.6 303.0 160.3 299.6" stroke="#777" stroke-width="0.55" fill="none"/><path d="M119.1 288.7Q116.3 285.0 115.2 281.2" stroke="#6a6a6a" stroke-width="0.55" fill="none"/><path d="M52.4 198.5Q53.1 196.7 53.0 194.9" stroke="#777" stroke-width="0.55" fill="none"/><path d="M121.5 252.0Q122.0 250.6 123.8 249.3" stroke="#8a8a8a" stroke-width="0.55" fill="none"/><path d="M17.2 280.7Q20.1 279.0 24.4 277.2" stroke="#999" stroke-width="0.55" fill="none"/><path d="M180.7 360.7Q183.0 358.8 182.7 356.9" stroke="#999" stroke-width="0.55" fill="none"/><path d="M188.3 213.2Q188.5 210.8 186.7 208.4" stroke="#999" stroke-width="0.55" fill="none"/><path d="M206.1 340.8Q209.8 337.4 210.0 334.0" stroke="#8a8a8a" stroke-width="0.55" fill="none"/><path d="M102.3 340.4Q100.1 338.5 100.6 336.6" stroke="#8a8a8a" stroke-width="0.55" fill="none"/><path d="M68.8 363.4Q68.1 362.4 63.4 361.3" stroke="#6a6a6a" stroke-width="0.55" fill="none"/><path d="M37.2 193.6Q37.1 191.1 35.2 188.7" stroke="#999" stroke-width="0.55" fill="none"/><path d="M212.7 323.5Q210.7 322.1 208.9 320.7" stroke="#6a6a6a" stroke-width="0.55" fill="none"/><path d="M210.3 228.4Q209.9 226.8 206.4 225.1" stroke="#8a8a8a" stroke-width="0.55" fill="none"/><path d="M161.2 246.6Q163.2 244.9 165.0 243.3" stroke="#8a8a8a" stroke-width="0.55" fill="none"/><path d="M61.7 371.5Q61.5 369.5 64.1 367.5" stroke="#8a8a8a" stroke-width="0.55" fill="none"/><path d="M154.9 271.3Q157.9 269.9 158.0 268.6" stroke="#777" stroke-width="0.55" fill="none"/><path d="M25.7 257.4Q23.1 256.0 18.4 254.6" stroke="#6a6a6a" stroke-width="0.55" fill="none"/><path d="M157.5 366.2Q155.8 364.1 150.4 362.0" stroke="#777" stroke-width="0.55" fill="none"/><path d="M272.8 273.1Q269.4 271.6 267.9 270.0" stroke="#999" stroke-width="0.55" fill="none"/><path d="M142.2 202.6Q143.6 200.5 145.6 198.4" stroke="#8a8a8a" stroke-width="0.55" fill="none"/><path d="M60.4 269.3Q64.2 266.7 65.4 264.0" stroke="#999" stroke-width="0.55" fill="none"/><path d="M256.3 261.5Q260.5 257.9 261.6 254.2" stroke="#777" stroke-width="0.55" fill="none"/><path d="M84.8 227.5Q80.9 225.5 78.0 223.4" stroke="#999" stroke-width="0.55" fill="none"/><path d="M118.0 242.0Q117.2 239.5 115.1 237.0" stroke="#8a8a8a" stroke-width="0.55" fill="none"/><path d="M215.4 330.2Q214.3 328.7 216.9 327.1" stroke="#999" stroke-width="0.55" fill="none"/><path d="M247.9 228.6Q250.9 227.5 250.1 226.4" stroke="#999" stroke-width="0.55" fill="none"/><path d="M38.2 235.8Q40.0 233.8 45.6 231.7" stroke="#777" stroke-width="0.55" fill="none"/><path d="M227.5 208.5Q227.5 206.7 228.9 205.0" stroke="#777" stroke-width="0.55" fill="none"/><path d="M42.6 286.8Q43.0 282.9 46.7 279.0" stroke="#8a8a8a" stroke-width="0.55" fill="none"/><path d="M29.6 265.3Q31.8 264.0 33.7 262.7" stroke="#999" stroke-width="0.55" fill="none"/><path d="M270.4 236.6Q268.9 233.9 266.9 231.2" stroke="#999" stroke-width="0.55" fill="none"/><path d="M37.4 280.1Q35.1 278.8 30.7 277.5" stroke="#999" stroke-width="0.55" fill="none"/><path d="M65.1 322.6Q65.3 320.7 63.1 318.7" stroke="#777" stroke-width="0.55" fill="none"/><path d="M10.7 262.8Q7.6 261.8 6.1 260.8" stroke="#999" stroke-width="0.55" fill="none"/><path d="M28.7 215.3Q28.5 211.2 30.1 207.0" stroke="#999" stroke-width="0.55" fill="none"/><path d="M276.6 247.6Q276.7 246.6 280.1 245.6" stroke="#999" stroke-width="0.55" fill="none"/><path d="M15.5 231.4Q12.7 229.5 9.9 227.6" stroke="#6a6a6a" stroke-width="0.55" fill="none"/><path d="M232.3 218.0Q232.5 215.4 232.2 212.9" stroke="#777" stroke-width="0.55" fill="none"/><path d="M158.7 200.6Q157.3 198.4 152.7 196.2" stroke="#6a6a6a" stroke-width="0.55" fill="none"/><path d="M270.9 240.7Q273.4 238.9 273.9 237.1" stroke="#6a6a6a" stroke-width="0.55" fill="none"/><path d="M70.4 197.5Q69.9 195.9 67.1 194.4" stroke="#6a6a6a" stroke-width="0.55" fill="none"/><path d="M165.8 351.4Q169.2 348.5 172.0 345.6" stroke="#8a8a8a" stroke-width="0.55" fill="none"/><path d="M252.5 257.3Q253.0 255.4 252.1 253.5" stroke="#999" stroke-width="0.55" fill="none"/><path d="M188.7 310.6Q188.0 309.0 188.0 307.5" stroke="#999" stroke-width="0.55" fill="none"/><path d="M171.4 233.1Q166.1 230.6 164.3 228.0" stroke="#8a8a8a" stroke-width="0.55" fill="none"/><path d="M11.9 322.6Q12.2 320.2 12.2 317.7" stroke="#8a8a8a" stroke-width="0.55" fill="none"/><path d="M267.8 316.0Q266.5 313.8 266.7 311.5" stroke="#999" stroke-width="0.55" fill="none"/><path d="M83.6 193.3Q85.4 189.5 83.9 185.7" stroke="#999" stroke-width="0.55" fill="none"/><path d="M106.6 311.7Q105.2 307.8 102.8 303.9" stroke="#999" stroke-width="0.55" fill="none"/><path d="M24.7 256.8Q24.9 255.1 24.1 253.4" stroke="#999" stroke-width="0.55" fill="none"/><path d="M48.9 218.1Q50.0 215.5 51.6 212.8" stroke="#6a6a6a" stroke-width="0.55" fill="none"/><path d="M255.4 219.3Q255.5 217.0 255.3 214.6" stroke="#777" stroke-width="0.55" fill="none"/><path d="M155.5 312.9Q158.6 310.8 159.0 308.7" stroke="#6a6a6a" stroke-width="0.55" fill="none"/><path d="M172.7 228.5Q174.9 226.6 176.9 224.8" stroke="#999" stroke-width="0.55" fill="none"/><path d="M176.2 309.0Q173.8 306.4 169.2 303.8" stroke="#6a6a6a" stroke-width="0.55" fill="none"/><path d="M26.9 350.6Q27.0 348.7 29.6 346.8" stroke="#999" stroke-width="0.55" fill="none"/><path d="M48.2 253.6Q46.5 251.5 41.9 249.3" stroke="#8a8a8a" stroke-width="0.55" fill="none"/><path d="M87.3 246.0Q89.3 245.1 92.1 244.2" stroke="#8a8a8a" stroke-width="0.55" fill="none"/><path d="M84.4 225.6Q88.8 222.3 90.0 219.0" stroke="#999" stroke-width="0.55" fill="none"/><path d="M29.2 268.3Q27.4 267.4 25.2 266.6" stroke="#6a6a6a" stroke-width="0.55" fill="none"/><path d="M182.4 316.4Q179.9 314.0 180.8 311.7" stroke="#999" stroke-width="0.55" fill="none"/><path d="M28.8 332.1Q27.3 330.3 29.1 328.5" stroke="#999" stroke-width="0.55" fill="none"/><path d="M122.5 242.3Q125.1 241.0 128.3 239.7" stroke="#777" stroke-width="0.55" fill="none"/><path d="M246.9 370.6Q246.4 368.9 248.4 367.1" stroke="#777" stroke-width="0.55" fill="none"/><path d="M91.2 339.8Q87.0 337.8 86.4 335.8" stroke="#999" stroke-width="0.55" fill="none"/><path d="M85.8 293.1Q86.1 289.4 88.3 285.7" stroke="#777" stroke-width="0.55" fill="none"/><path d="M208.4 239.4Q210.5 237.0 211.8 234.7" stroke="#777" stroke-width="0.55" fill="none"/><path d="M166.9 275.7Q169.3 272.3 172.2 268.9" stroke="#777" stroke-width="0.55" fill="none"/><path d="M37.3 223.4Q37.6 221.6 36.9 219.8" stroke="#777" stroke-width="0.55" fill="none"/><path d="M224.5 280.2Q227.0 278.8 228.4 277.4" stroke="#8a8a8a" stroke-width="0.55" fill="none"/><path d="M151.9 293.5Q150.3 292.7 148.0 291.9" stroke="#999" stroke-width="0.55" fill="none"/><path d="M178.9 281.5Q181.6 279.3 186.0 277.2" stroke="#6a6a6a" stroke-width="0.55" fill="none"/><path d="M16.2 245.2Q14.2 242.6 13.2 239.9" stroke="#777" stroke-width="0.55" fill="none"/><path d="M81.2 228.2Q77.1 226.4 73.2 224.6" stroke="#777" stroke-width="0.55" fill="none"/><path d="M87.5 347.4Q88.2 344.0 86.1 340.6" stroke="#999" stroke-width="0.55" fill="none"/><path d="M95.2 325.5Q97.1 322.8 98.1 320.2" stroke="#8a8a8a" stroke-width="0.55" fill="none"/><path d="M44.6 282.5Q46.7 281.4 46.6 280.2" stroke="#6a6a6a" stroke-width="0.55" fill="none"/><path d="M12.1 289.9Q8.5 288.1 7.4 286.4" stroke="#777" stroke-width="0.55" fill="none"/><path d="M238.7 236.1Q239.7 232.4 241.6 228.7" stroke="#777" stroke-width="0.55" fill="none"/><path d="M180.8 359.5Q177.8 357.8 178.2 356.2" stroke="#6a6a6a" stroke-width="0.55" fill="none"/><path d="M121.8 248.5Q121.0 244.9 119.5 241.4" stroke="#999" stroke-width="0.55" fill="none"/><path d="M219.7 324.5Q218.0 320.4 220.3 316.2" stroke="#999" stroke-width="0.55" fill="none"/><path d="M15.9 195.6Q12.6 193.4 9.7 191.3" stroke="#999" stroke-width="0.55" fill="none"/><path d="M251.7 278.0Q250.7 276.8 247.6 275.6" stroke="#999" stroke-width="0.55" fill="none"/><path d="M233.7 304.1Q237.0 301.8 239.3 299.4" stroke="#8a8a8a" stroke-width="0.55" fill="none"/><path d="M182.4 273.4Q185.9 272.1 187.9 270.9" stroke="#777" stroke-width="0.55" fill="none"/><path d="M28.0 259.9Q24.9 258.5 25.8 257.1" stroke="#999" stroke-width="0.55" fill="none"/><path d="M16.2 226.9Q16.2 223.0 14.1 219.0" stroke="#8a8a8a" stroke-width="0.55" fill="none"/><path d="M250.5 317.7Q249.8 315.7 249.4 313.6" stroke="#999" stroke-width="0.55" fill="none"/><path d="M269.1 242.6Q267.8 240.3 265.0 238.0" stroke="#6a6a6a" stroke-width="0.55" fill="none"/><path d="M213.6 350.6Q216.0 347.4 219.1 344.2" stroke="#999" stroke-width="0.55" fill="none"/><path d="M205.1 229.7Q208.2 226.9 208.4 224.1" stroke="#8a8a8a" stroke-width="0.55" fill="none"/><path d="M53.8 289.6Q50.9 285.8 51.2 281.9" stroke="#999" stroke-width="0.55" fill="none"/><path d="M101.5 219.0Q97.9 218.2 97.1 217.3" stroke="#999" stroke-width="0.55" fill="none"/><path d="M265.5 327.5Q266.5 323.9 264.9 320.3" stroke="#6a6a6a" stroke-width="0.55" fill="none"/><path d="M203.4 353.3Q204.4 350.5 201.5 347.7" stroke="#6a6a6a" stroke-width="0.55" fill="none"/><path d="M212.0 279.5Q213.2 275.6 211.0 271.7" stroke="#999" stroke-width="0.55" fill="none"/><path d="M47.8 270.2Q48.7 268.2 51.8 266.2" stroke="#6a6a6a" stroke-width="0.55" fill="none"/><path d="M30.6 286.0Q28.8 282.2 30.3 278.4" stroke="#6a6a6a" stroke-width="0.55" fill="none"/><path d="M26.4 325.2Q26.7 322.7 24.1 320.2" stroke="#8a8a8a" stroke-width="0.55" fill="none"/><path d="M86.7 315.7Q85.1 313.8 86.8 311.9" stroke="#8a8a8a" stroke-width="0.55" fill="none"/><path d="M11.4 285.9Q9.6 283.0 10.6 280.1" stroke="#6a6a6a" stroke-width="0.55" fill="none"/><path d="M172.5 296.6Q174.2 292.2 172.9 287.8" stroke="#8a8a8a" stroke-width="0.55" fill="none"/><path d="M165.2 206.2Q163.3 203.6 164.1 201.0" stroke="#999" stroke-width="0.55" fill="none"/><path d="M24.6 255.0Q25.4 253.1 26.5 251.1" stroke="#8a8a8a" stroke-width="0.55" fill="none"/><path d="M232.5 282.9Q234.7 282.2 235.4 281.5" stroke="#8a8a8a" stroke-width="0.55" fill="none"/><path d="M166.6 354.0Q167.9 351.6 166.1 349.2" stroke="#6a6a6a" stroke-width="0.55" fill="none"/><path d="M143.7 209.9Q145.8 208.1 148.6 206.3" stroke="#777" stroke-width="0.55" fill="none"/><path d="M172.2 266.4Q169.8 264.7 167.9 262.9" stroke="#8a8a8a" stroke-width="0.55" fill="none"/><path d="M85.7 259.1Q85.1 255.9 87.1 252.6" stroke="#999" stroke-width="0.55" fill="none"/><path d="M40.1 248.3Q41.6 245.1 41.5 242.0" stroke="#8a8a8a" stroke-width="0.55" fill="none"/><path d="M18.9 207.7Q17.8 204.8 15.5 201.9" stroke="#8a8a8a" stroke-width="0.55" fill="none"/><path d="M121.4 246.7Q123.6 243.1 121.9 239.5" stroke="#999" stroke-width="0.55" fill="none"/><path d="M235.7 305.1Q232.7 302.3 229.9 299.4" stroke="#6a6a6a" stroke-width="0.55" fill="none"/><path d="M237.9 209.0Q238.1 206.6 234.9 204.2" stroke="#6a6a6a" stroke-width="0.55" fill="none"/><path d="M264.0 363.2Q268.0 361.5 268.1 359.7" stroke="#777" stroke-width="0.55" fill="none"/><path d="M40.5 337.9Q38.1 334.9 38.3 332.0" stroke="#999" stroke-width="0.55" fill="none"/><path d="M2.7 316.7Q-0.4 314.9 -0.7 313.1" stroke="#999" stroke-width="0.55" fill="none"/><path d="M33.1 261.4Q31.4 259.9 30.3 258.4" stroke="#999" stroke-width="0.55" fill="none"/><path d="M245.1 313.9Q244.0 313.0 242.5 312.0" stroke="#8a8a8a" stroke-width="0.55" fill="none"/><path d="M94.8 303.7Q94.8 302.8 98.3 301.8" stroke="#999" stroke-width="0.55" fill="none"/><path d="M9.3 279.0Q13.0 278.0 12.9 276.9" stroke="#6a6a6a" stroke-width="0.55" fill="none"/><path d="M220.7 233.0Q216.5 231.8 215.4 230.6" stroke="#777" stroke-width="0.55" fill="none"/><path d="M30.4 318.5Q32.5 317.5 33.5 316.4" stroke="#6a6a6a" stroke-width="0.55" fill="none"/><path d="M219.1 239.2Q216.3 237.5 217.0 235.8" stroke="#777" stroke-width="0.55" fill="none"/><path d="M67.5 367.3Q69.8 364.1 72.4 360.9" stroke="#777" stroke-width="0.55" fill="none"/><path d="M238.3 325.0Q241.6 323.1 244.5 321.1" stroke="#999" stroke-width="0.55" fill="none"/><path d="M186.2 210.6Q185.6 207.9 188.9 205.3" stroke="#777" stroke-width="0.55" fill="none"/><path d="M33.6 207.6Q34.8 205.5 32.2 203.3" stroke="#999" stroke-width="0.55" fill="none"/><path d="M1.9 319.1Q3.3 318.4 4.5 317.7" stroke="#6a6a6a" stroke-width="0.55" fill="none"/><path d="M88.8 307.8Q90.6 304.7 94.1 301.6" stroke="#777" stroke-width="0.55" fill="none"/><path d="M192.0 300.1Q194.0 299.0 195.5 297.9" stroke="#8a8a8a" stroke-width="0.55" fill="none"/><path d="M64.0 230.2Q63.8 226.7 65.4 223.3" stroke="#777" stroke-width="0.55" fill="none"/><path d="M57.8 359.7Q59.0 357.9 58.6 356.1" stroke="#999" stroke-width="0.55" fill="none"/><path d="M62.1 272.5Q61.1 270.5 59.4 268.5" stroke="#999" stroke-width="0.55" fill="none"/><path d="M224.2 310.7Q225.6 307.3 226.5 304.0" stroke="#8a8a8a" stroke-width="0.55" fill="none"/><path d="M84.6 294.3Q85.1 291.2 87.1 288.2" stroke="#6a6a6a" stroke-width="0.55" fill="none"/><path d="M234.7 347.2Q232.2 344.1 232.1 341.1" stroke="#777" stroke-width="0.55" fill="none"/><path d="M207.6 303.5Q209.8 301.4 214.4 299.2" stroke="#8a8a8a" stroke-width="0.55" fill="none"/><path d="M55.6 322.7Q56.3 321.1 58.9 319.5" stroke="#6a6a6a" stroke-width="0.55" fill="none"/><path d="M87.3 213.4Q89.6 211.2 88.4 209.1" stroke="#999" stroke-width="0.55" fill="none"/><path d="M123.8 239.6Q122.3 236.7 123.6 233.7" stroke="#999" stroke-width="0.55" fill="none"/><path d="M276.8 265.0Q275.6 262.6 272.4 260.1" stroke="#6a6a6a" stroke-width="0.55" fill="none"/><path d="M92.7 316.9Q93.8 314.4 94.1 311.9" stroke="#777" stroke-width="0.55" fill="none"/><path d="M259.1 321.1Q259.8 317.9 262.6 314.7" stroke="#8a8a8a" stroke-width="0.55" fill="none"/><path d="M79.3 370.5Q80.5 367.8 79.0 365.0" stroke="#777" stroke-width="0.55" fill="none"/><path d="M214.3 277.7Q213.9 273.5 213.1 269.2" stroke="#777" stroke-width="0.55" fill="none"/><path d="M90.7 322.2Q88.1 319.9 83.2 317.6" stroke="#999" stroke-width="0.55" fill="none"/><path d="M151.1 335.9Q148.0 333.3 144.9 330.6" stroke="#777" stroke-width="0.55" fill="none"/><path d="M268.4 338.3Q264.6 336.4 261.4 334.5" stroke="#777" stroke-width="0.55" fill="none"/><path d="M264.9 329.8Q266.6 327.9 268.0 325.9" stroke="#6a6a6a" stroke-width="0.55" fill="none"/><path d="M200.0 368.7Q200.6 365.7 199.9 362.7" stroke="#6a6a6a" stroke-width="0.55" fill="none"/><path d="M13.7 366.6Q11.9 364.2 13.7 361.7" stroke="#777" stroke-width="0.55" fill="none"/><path d="M153.6 238.9Q151.5 235.4 148.1 231.9" stroke="#999" stroke-width="0.55" fill="none"/><path d="M186.9 295.9Q186.0 291.7 186.4 287.5" stroke="#6a6a6a" stroke-width="0.55" fill="none"/><path d="M60.5 272.0Q61.1 270.1 63.7 268.3" stroke="#6a6a6a" stroke-width="0.55" fill="none"/><path d="M215.2 363.5Q212.9 361.4 212.2 359.3" stroke="#999" stroke-width="0.55" fill="none"/><path d="M70.8 289.2Q68.5 287.7 64.8 286.2" stroke="#8a8a8a" stroke-width="0.55" fill="none"/><path d="M28.3 247.4Q28.9 246.4 31.7 245.5" stroke="#6a6a6a" stroke-width="0.55" fill="none"/><path d="M250.7 269.8Q251.8 268.5 249.0 267.3" stroke="#999" stroke-width="0.55" fill="none"/><path d="M206.4 339.8Q205.6 338.4 205.1 337.1" stroke="#777" stroke-width="0.55" fill="none"/><path d="M101.7 367.4Q99.4 363.9 97.5 360.4" stroke="#8a8a8a" stroke-width="0.55" fill="none"/><path d="M127.0 249.2Q125.9 244.9 126.4 240.5" stroke="#8a8a8a" stroke-width="0.55" fill="none"/><path d="M68.4 269.5Q69.3 268.1 66.2 266.6" stroke="#999" stroke-width="0.55" fill="none"/><path d="M146.6 314.9Q146.3 311.4 147.0 307.8" stroke="#777" stroke-width="0.55" fill="none"/><path d="M199.0 197.3Q200.1 194.1 197.6 190.8" stroke="#999" stroke-width="0.55" fill="none"/><path d="M94.4 235.3Q93.2 232.8 94.3 230.4" stroke="#999" stroke-width="0.55" fill="none"/><path d="M135.2 205.4Q137.0 204.4 138.1 203.4" stroke="#6a6a6a" stroke-width="0.55" fill="none"/><path d="M276.5 271.3Q274.4 267.8 276.0 264.3" stroke="#777" stroke-width="0.55" fill="none"/><path d="M14.1 270.1Q13.9 266.2 16.0 262.3" stroke="#777" stroke-width="0.55" fill="none"/><path d="M192.1 333.3Q192.1 331.1 188.6 328.9" stroke="#999" stroke-width="0.55" fill="none"/><path d="M160.5 349.3Q157.9 347.4 156.4 345.5" stroke="#8a8a8a" stroke-width="0.55" fill="none"/><path d="M248.1 246.8Q247.9 242.8 244.4 238.7" stroke="#777" stroke-width="0.55" fill="none"/><path d="M20.5 243.6Q24.2 241.7 26.4 239.8" stroke="#8a8a8a" stroke-width="0.55" fill="none"/><path d="M208.1 260.2Q210.6 257.7 214.0 255.2" stroke="#999" stroke-width="0.55" fill="none"/><path d="M104.4 241.3Q107.2 240.1 109.2 238.8" stroke="#8a8a8a" stroke-width="0.55" fill="none"/><path d="M95.7 201.1Q98.7 199.0 102.2 196.9" stroke="#999" stroke-width="0.55" fill="none"/><path d="M188.1 213.6Q186.3 209.3 185.3 205.0" stroke="#8a8a8a" stroke-width="0.55" fill="none"/><path d="M105.9 250.0Q103.6 248.5 102.6 247.0" stroke="#6a6a6a" stroke-width="0.55" fill="none"/><path d="M137.9 223.8Q139.7 221.8 145.1 219.7" stroke="#999" stroke-width="0.55" fill="none"/><path d="M91.9 208.8Q92.9 207.5 97.3 206.3" stroke="#777" stroke-width="0.55" fill="none"/><path d="M170.1 284.1Q171.2 281.4 172.6 278.7" stroke="#999" stroke-width="0.55" fill="none"/><path d="M122.8 336.3Q124.4 332.2 125.3 328.1" stroke="#777" stroke-width="0.55" fill="none"/><path d="M29.6 329.7Q31.4 327.0 32.6 324.4" stroke="#6a6a6a" stroke-width="0.55" fill="none"/><path d="M215.6 346.4Q218.0 342.4 216.8 338.3" stroke="#8a8a8a" stroke-width="0.55" fill="none"/><path d="M196.3 232.7Q193.5 229.5 190.0 226.3" stroke="#6a6a6a" stroke-width="0.55" fill="none"/><path d="M80.5 353.9Q80.7 351.0 83.7 348.1" stroke="#999" stroke-width="0.55" fill="none"/><path d="M80.4 304.9Q77.9 301.5 77.3 298.1" stroke="#6a6a6a" stroke-width="0.55" fill="none"/><path d="M9.7 244.5Q11.5 241.9 11.1 239.3" stroke="#777" stroke-width="0.55" fill="none"/><path d="M73.4 206.7Q74.1 204.9 74.1 203.2" stroke="#8a8a8a" stroke-width="0.55" fill="none"/><path d="M238.8 371.6Q238.2 368.7 237.7 365.7" stroke="#6a6a6a" stroke-width="0.55" fill="none"/><path d="M90.1 311.9Q93.7 310.4 93.5 308.9" stroke="#777" stroke-width="0.55" fill="none"/><path d="M164.8 297.3Q164.3 296.1 161.9 295.0" stroke="#6a6a6a" stroke-width="0.55" fill="none"/><path d="M78.8 306.2Q75.0 303.6 74.8 301.0" stroke="#8a8a8a" stroke-width="0.55" fill="none"/><path d="M36.9 330.5Q38.5 328.5 38.6 326.5" stroke="#6a6a6a" stroke-width="0.55" fill="none"/><path d="M209.4 211.1Q207.8 208.8 205.4 206.4" stroke="#777" stroke-width="0.55" fill="none"/><path d="M162.9 354.6Q161.3 351.6 162.9 348.6" stroke="#777" stroke-width="0.55" fill="none"/><path d="M153.6 302.9Q154.6 298.9 155.7 294.8" stroke="#777" stroke-width="0.55" fill="none"/><path d="M175.8 266.8Q176.4 264.8 177.8 262.7" stroke="#8a8a8a" stroke-width="0.55" fill="none"/><path d="M116.4 371.9Q115.9 368.7 115.7 365.4" stroke="#999" stroke-width="0.55" fill="none"/><path d="M228.6 252.1Q230.8 250.0 231.5 247.9" stroke="#999" stroke-width="0.55" fill="none"/><path d="M33.6 323.7Q36.8 320.1 38.4 316.5" stroke="#8a8a8a" stroke-width="0.55" fill="none"/><path d="M54.1 339.1Q56.1 337.6 59.5 336.1" stroke="#999" stroke-width="0.55" fill="none"/><path d="M277.3 254.4Q276.0 252.8 273.1 251.1" stroke="#8a8a8a" stroke-width="0.55" fill="none"/><path d="M188.2 286.3Q191.3 285.3 191.0 284.3" stroke="#999" stroke-width="0.55" fill="none"/><path d="M211.3 255.6Q212.6 253.4 209.9 251.3" stroke="#777" stroke-width="0.55" fill="none"/><path d="M23.5 312.9Q19.7 308.9 19.6 304.9" stroke="#999" stroke-width="0.55" fill="none"/><path d="M253.4 300.3Q255.8 298.2 254.6 296.1" stroke="#777" stroke-width="0.55" fill="none"/><path d="M3.3 272.9Q5.6 271.5 6.4 270.1" stroke="#6a6a6a" stroke-width="0.55" fill="none"/><path d="M138.8 282.2Q137.8 280.8 133.9 279.3" stroke="#777" stroke-width="0.55" fill="none"/><path d="M162.9 288.4Q164.1 284.6 164.3 280.8" stroke="#6a6a6a" stroke-width="0.55" fill="none"/><path d="M230.4 210.5Q233.2 209.3 233.3 208.2" stroke="#8a8a8a" stroke-width="0.55" fill="none"/><path d="M150.4 235.8Q146.7 234.7 145.1 233.5" stroke="#6a6a6a" stroke-width="0.55" fill="none"/><path d="M31.9 331.4Q30.7 327.8 31.3 324.2" stroke="#6a6a6a" stroke-width="0.55" fill="none"/><path d="M271.3 295.4Q268.1 292.8 267.3 290.2" stroke="#777" stroke-width="0.55" fill="none"/><path d="M247.1 215.6Q246.2 212.4 249.1 209.3" stroke="#6a6a6a" stroke-width="0.55" fill="none"/><path d="M260.8 279.9Q260.4 279.3 258.0 278.7" stroke="#777" stroke-width="0.55" fill="none"/><path d="M40.1 358.8Q37.7 356.7 38.4 354.6" stroke="#6a6a6a" stroke-width="0.55" fill="none"/><path d="M73.6 229.4Q74.6 226.0 74.3 222.5" stroke="#6a6a6a" stroke-width="0.55" fill="none"/><path d="M51.6 271.1Q49.8 269.5 49.3 267.8" stroke="#777" stroke-width="0.55" fill="none"/><path d="M271.7 364.5Q275.9 363.4 277.6 362.3" stroke="#8a8a8a" stroke-width="0.55" fill="none"/><path d="M254.3 368.3Q253.8 367.2 251.3 366.1" stroke="#6a6a6a" stroke-width="0.55" fill="none"/><path d="M74.7 347.9Q77.4 345.8 82.2 343.6" stroke="#999" stroke-width="0.55" fill="none"/><path d="M218.4 235.3Q218.3 233.9 215.5 232.6" stroke="#6a6a6a" stroke-width="0.55" fill="none"/><path d="M179.2 229.5Q180.5 227.9 185.4 226.3" stroke="#6a6a6a" stroke-width="0.55" fill="none"/><path d="M116.8 260.0Q113.7 258.9 110.8 257.7" stroke="#6a6a6a" stroke-width="0.55" fill="none"/><path d="M192.8 317.3Q197.1 316.1 199.0 315.0" stroke="#999" stroke-width="0.55" fill="none"/><path d="M197.7 263.3Q195.3 261.3 191.2 259.4" stroke="#999" stroke-width="0.55" fill="none"/><path d="M231.0 231.5Q230.8 229.2 227.9 226.9" stroke="#8a8a8a" stroke-width="0.55" fill="none"/><path d="M101.5 270.6Q102.7 269.7 106.4 268.8" stroke="#6a6a6a" stroke-width="0.55" fill="none"/><path d="M217.0 239.9Q211.5 237.6 209.4 235.4" stroke="#6a6a6a" stroke-width="0.55" fill="none"/><path d="M173.6 216.6Q176.5 212.9 176.4 209.2" stroke="#6a6a6a" stroke-width="0.55" fill="none"/><path d="M177.2 214.4Q179.2 213.5 181.6 212.6" stroke="#777" stroke-width="0.55" fill="none"/><path d="M223.8 307.2Q222.9 305.8 221.5 304.5" stroke="#777" stroke-width="0.55" fill="none"/><path d="M141.1 241.1Q141.7 239.3 139.6 237.4" stroke="#999" stroke-width="0.55" fill="none"/><path d="M170.3 243.4Q169.0 240.8 170.4 238.3" stroke="#999" stroke-width="0.55" fill="none"/><path d="M229.0 317.4Q231.4 314.1 230.9 310.9" stroke="#999" stroke-width="0.55" fill="none"/><path d="M31.8 352.7Q30.3 351.7 27.5 350.7" stroke="#777" stroke-width="0.55" fill="none"/><path d="M4.8 283.2Q2.7 281.6 3.4 280.1" stroke="#999" stroke-width="0.55" fill="none"/><path d="M154.8 246.9Q154.6 244.1 153.5 241.3" stroke="#6a6a6a" stroke-width="0.55" fill="none"/><path d="M248.4 220.0Q246.6 216.5 243.8 213.1" stroke="#777" stroke-width="0.55" fill="none"/><path d="M258.3 219.3Q256.3 216.4 254.4 213.4" stroke="#999" stroke-width="0.55" fill="none"/><path d="M200.6 370.5Q202.2 367.8 200.9 365.1" stroke="#777" stroke-width="0.55" fill="none"/><path d="M206.9 260.2Q210.1 258.6 209.5 256.9" stroke="#777" stroke-width="0.55" fill="none"/><path d="M238.0 368.0Q241.6 366.6 244.2 365.3" stroke="#8a8a8a" stroke-width="0.55" fill="none"/><path d="M36.9 273.0Q32.5 270.6 31.4 268.2" stroke="#999" stroke-width="0.55" fill="none"/><path d="M258.6 310.8Q261.4 309.3 260.2 307.8" stroke="#999" stroke-width="0.55" fill="none"/><path d="M53.9 316.6Q54.0 314.1 53.4 311.5" stroke="#6a6a6a" stroke-width="0.55" fill="none"/><path d="M198.7 362.3Q197.8 361.2 195.5 360.1" stroke="#999" stroke-width="0.55" fill="none"/><path d="M242.2 233.8Q246.2 231.1 248.8 228.3" stroke="#999" stroke-width="0.55" fill="none"/><path d="M120.3 281.8Q119.4 279.2 119.9 276.5" stroke="#999" stroke-width="0.55" fill="none"/><path d="M2.2 373.9Q0.1 372.3 -4.8 370.7" stroke="#6a6a6a" stroke-width="0.55" fill="none"/><path d="M96.5 353.9Q93.3 351.8 89.0 349.6" stroke="#999" stroke-width="0.55" fill="none"/><path d="M62.8 208.3Q64.9 205.2 64.4 202.1" stroke="#999" stroke-width="0.55" fill="none"/><path d="M69.7 337.2Q69.0 335.3 65.9 333.4" stroke="#777" stroke-width="0.55" fill="none"/><path d="M257.4 229.3Q256.5 227.8 252.1 226.2" stroke="#999" stroke-width="0.55" fill="none"/><path d="M153.0 244.7Q156.6 243.4 158.6 242.1" stroke="#6a6a6a" stroke-width="0.55" fill="none"/><path d="M100.9 370.1Q96.9 367.8 96.5 365.5" stroke="#777" stroke-width="0.55" fill="none"/><path d="M218.7 263.2Q215.5 259.7 215.0 256.2" stroke="#6a6a6a" stroke-width="0.55" fill="none"/><path d="M87.6 218.2Q87.0 214.2 84.2 210.1" stroke="#6a6a6a" stroke-width="0.55" fill="none"/><path d="M246.9 347.1Q245.9 345.1 244.9 343.1" stroke="#777" stroke-width="0.55" fill="none"/><path d="M147.5 311.7Q150.8 309.1 152.4 306.6" stroke="#6a6a6a" stroke-width="0.55" fill="none"/><path d="M120.1 313.1Q120.0 312.2 117.4 311.3" stroke="#6a6a6a" stroke-width="0.55" fill="none"/><path d="M42.4 336.8Q42.1 335.3 45.5 333.9" stroke="#999" stroke-width="0.55" fill="none"/><path d="M210.7 255.0Q212.0 253.1 209.5 251.2" stroke="#8a8a8a" stroke-width="0.55" fill="none"/><path d="M47.6 363.8Q42.2 361.7 40.5 359.5" stroke="#8a8a8a" stroke-width="0.55" fill="none"/><path d="M22.9 200.6Q22.5 197.3 21.8 194.1" stroke="#6a6a6a" stroke-width="0.55" fill="none"/><path d="M143.6 258.2Q142.9 257.1 138.7 255.9" stroke="#8a8a8a" stroke-width="0.55" fill="none"/><path d="M46.5 261.9Q43.2 258.3 43.7 254.6" stroke="#777" stroke-width="0.55" fill="none"/><path d="M40.7 341.9Q40.1 340.5 37.5 339.2" stroke="#6a6a6a" stroke-width="0.55" fill="none"/><path d="M238.3 362.7Q235.9 360.7 230.7 358.6" stroke="#777" stroke-width="0.55" fill="none"/><path d="M36.3 363.7Q39.2 362.3 44.1 360.8" stroke="#777" stroke-width="0.55" fill="none"/><path d="M204.0 320.6Q205.1 318.5 205.5 316.4" stroke="#999" stroke-width="0.55" fill="none"/><path d="M221.2 284.1Q220.6 281.3 216.6 278.6" stroke="#777" stroke-width="0.55" fill="none"/><path d="M278.6 332.7Q280.7 330.0 282.5 327.3" stroke="#777" stroke-width="0.55" fill="none"/><path d="M251.2 290.3Q250.8 288.3 247.3 286.3" stroke="#777" stroke-width="0.55" fill="none"/><path d="M278.2 306.3Q278.4 303.4 277.6 300.4" stroke="#6a6a6a" stroke-width="0.55" fill="none"/><path d="M136.7 356.5Q140.3 353.3 142.0 350.1" stroke="#777" stroke-width="0.55" fill="none"/><path d="M55.3 281.8Q55.6 280.1 52.2 278.3" stroke="#777" stroke-width="0.55" fill="none"/><path d="M55.1 253.0Q54.3 250.9 54.8 248.9" stroke="#8a8a8a" stroke-width="0.55" fill="none"/><path d="M180.7 321.4Q180.0 318.9 181.9 316.4" stroke="#777" stroke-width="0.55" fill="none"/><path d="M218.9 334.7Q217.5 331.5 220.0 328.4" stroke="#6a6a6a" stroke-width="0.55" fill="none"/><path d="M69.7 321.7Q67.2 319.3 63.9 316.8" stroke="#777" stroke-width="0.55" fill="none"/><path d="M193.0 350.3Q192.0 346.9 191.8 343.6" stroke="#999" stroke-width="0.55" fill="none"/><path d="M42.5 341.1Q42.0 337.9 40.0 334.8" stroke="#6a6a6a" stroke-width="0.55" fill="none"/><path d="M196.5 248.7Q194.3 247.1 191.8 245.6" stroke="#6a6a6a" stroke-width="0.55" fill="none"/><path d="M82.1 323.8Q81.7 321.9 82.5 320.1" stroke="#999" stroke-width="0.55" fill="none"/><path d="M258.1 232.0Q257.0 230.8 255.9 229.6" stroke="#6a6a6a" stroke-width="0.55" fill="none"/><path d="M212.1 196.8Q212.3 195.2 213.6 193.7" stroke="#6a6a6a" stroke-width="0.55" fill="none"/><path d="M117.5 214.8Q115.8 212.0 117.6 209.2" stroke="#8a8a8a" stroke-width="0.55" fill="none"/><path d="M8.1 260.4Q11.9 257.0 12.3 253.6" stroke="#6a6a6a" stroke-width="0.55" fill="none"/><path d="M265.3 250.0Q265.7 248.5 263.1 247.0" stroke="#6a6a6a" stroke-width="0.55" fill="none"/><path d="M43.8 270.5Q45.4 269.2 47.0 267.9" stroke="#6a6a6a" stroke-width="0.55" fill="none"/><path d="M91.1 279.8Q95.0 278.4 97.3 277.1" stroke="#6a6a6a" stroke-width="0.55" fill="none"/><path d="M227.1 284.8Q227.0 282.9 228.8 281.0" stroke="#777" stroke-width="0.55" fill="none"/><path d="M226.0 227.9Q226.0 224.9 222.8 221.8" stroke="#999" stroke-width="0.55" fill="none"/><path d="M103.0 275.7Q102.7 272.1 103.1 268.5" stroke="#6a6a6a" stroke-width="0.55" fill="none"/><path d="M149.1 284.8Q149.2 282.1 146.1 279.3" stroke="#777" stroke-width="0.55" fill="none"/><path d="M197.3 312.2Q194.1 311.0 192.6 309.9" stroke="#999" stroke-width="0.55" fill="none"/><path d="M236.3 338.9Q231.9 335.7 230.3 332.4" stroke="#777" stroke-width="0.55" fill="none"/><path d="M121.4 307.3Q122.6 305.2 124.0 303.1" stroke="#999" stroke-width="0.55" fill="none"/><path d="M58.6 235.6Q58.4 232.7 61.8 229.8" stroke="#8a8a8a" stroke-width="0.55" fill="none"/><path d="M148.4 293.3Q151.7 291.0 152.4 288.8" stroke="#999" stroke-width="0.55" fill="none"/><path d="M92.6 200.6Q90.5 199.4 87.3 198.2" stroke="#999" stroke-width="0.55" fill="none"/><path d="M21.1 308.1Q20.9 304.6 18.8 301.2" stroke="#777" stroke-width="0.55" fill="none"/><path d="M27.3 291.5Q29.1 290.4 30.7 289.4" stroke="#999" stroke-width="0.55" fill="none"/><path d="M179.0 202.1Q182.8 198.8 184.7 195.5" stroke="#777" stroke-width="0.55" fill="none"/><path d="M97.9 338.7Q95.3 337.3 95.4 336.0" stroke="#8a8a8a" stroke-width="0.55" fill="none"/><path d="M113.3 215.6Q113.4 212.7 116.1 209.7" stroke="#6a6a6a" stroke-width="0.55" fill="none"/><path d="M258.1 228.2Q259.9 225.7 259.6 223.1" stroke="#999" stroke-width="0.55" fill="none"/><path d="M271.0 276.0Q270.4 273.2 266.2 270.3" stroke="#8a8a8a" stroke-width="0.55" fill="none"/><path d="M233.5 270.6Q236.5 268.5 237.8 266.4" stroke="#999" stroke-width="0.55" fill="none"/><path d="M22.7 283.3Q22.2 280.1 21.6 276.8" stroke="#6a6a6a" stroke-width="0.55" fill="none"/><path d="M192.3 310.0Q193.2 305.8 194.2 301.6" stroke="#8a8a8a" stroke-width="0.55" fill="none"/><path d="M38.8 299.6Q35.6 295.5 35.3 291.4" stroke="#8a8a8a" stroke-width="0.55" fill="none"/><path d="M173.6 305.7Q176.2 304.4 175.8 303.0" stroke="#8a8a8a" stroke-width="0.55" fill="none"/><path d="M205.1 212.3Q209.5 211.1 211.0 210.0" stroke="#6a6a6a" stroke-width="0.55" fill="none"/><path d="M202.1 240.0Q203.8 236.3 201.7 232.7" stroke="#6a6a6a" stroke-width="0.55" fill="none"/><path d="M80.6 290.5Q84.3 289.1 84.5 287.8" stroke="#999" stroke-width="0.55" fill="none"/><path d="M26.3 260.3Q26.0 256.7 27.5 253.1" stroke="#999" stroke-width="0.55" fill="none"/><path d="M212.9 291.2Q208.2 288.3 206.9 285.3" stroke="#777" stroke-width="0.55" fill="none"/><path d="M242.6 354.4Q243.2 352.7 241.2 351.1" stroke="#8a8a8a" stroke-width="0.55" fill="none"/><path d="M206.7 202.6Q208.8 201.1 210.8 199.6" stroke="#999" stroke-width="0.55" fill="none"/><path d="M22.1 228.3Q18.9 226.2 18.9 224.2" stroke="#999" stroke-width="0.55" fill="none"/><path d="M48.9 332.8Q44.5 331.0 41.1 329.2" stroke="#8a8a8a" stroke-width="0.55" fill="none"/><path d="M255.1 355.1Q255.4 354.1 251.8 353.1" stroke="#777" stroke-width="0.55" fill="none"/><path d="M206.1 273.7Q203.7 271.9 199.1 270.0" stroke="#6a6a6a" stroke-width="0.55" fill="none"/><path d="M217.2 205.9Q216.0 204.0 212.5 202.2" stroke="#8a8a8a" stroke-width="0.55" fill="none"/><path d="M149.4 218.6Q147.3 216.8 143.1 215.0" stroke="#6a6a6a" stroke-width="0.55" fill="none"/><path d="M258.6 329.6Q256.7 326.4 253.2 323.3" stroke="#777" stroke-width="0.55" fill="none"/><path d="M137.5 270.9Q137.9 269.0 138.0 267.0" stroke="#6a6a6a" stroke-width="0.55" fill="none"/><path d="M241.4 325.2Q241.2 324.3 237.8 323.5" stroke="#777" stroke-width="0.55" fill="none"/><path d="M153.4 287.4Q152.6 286.2 151.1 285.1" stroke="#8a8a8a" stroke-width="0.55" fill="none"/><path d="M109.6 199.9Q109.7 199.2 106.2 198.5" stroke="#8a8a8a" stroke-width="0.55" fill="none"/><path d="M252.7 291.8Q251.0 289.3 252.7 286.8" stroke="#999" stroke-width="0.55" fill="none"/><path d="M234.9 358.7Q237.5 355.0 237.7 351.2" stroke="#6a6a6a" stroke-width="0.55" fill="none"/><path d="M140.8 319.9Q143.5 317.0 144.7 314.1" stroke="#777" stroke-width="0.55" fill="none"/><path d="M275.6 305.3Q277.7 303.8 278.8 302.4" stroke="#6a6a6a" stroke-width="0.55" fill="none"/><path d="M245.8 250.2Q245.0 247.9 246.6 245.6" stroke="#777" stroke-width="0.55" fill="none"/><path d="M133.6 229.3Q132.5 228.0 130.8 226.7" stroke="#8a8a8a" stroke-width="0.55" fill="none"/><path d="M223.1 346.6Q224.6 344.2 227.4 341.8" stroke="#6a6a6a" stroke-width="0.55" fill="none"/><path d="M51.8 320.4Q50.9 318.8 48.0 317.2" stroke="#6a6a6a" stroke-width="0.55" fill="none"/><path d="M158.5 337.3Q159.3 333.2 156.9 329.1" stroke="#8a8a8a" stroke-width="0.55" fill="none"/><path d="M82.3 267.8Q81.7 263.6 81.6 259.4" stroke="#777" stroke-width="0.55" fill="none"/><path d="M231.1 233.5Q233.8 231.8 233.5 230.1" stroke="#777" stroke-width="0.55" fill="none"/><path d="M246.1 333.5Q246.5 331.5 250.4 329.5" stroke="#8a8a8a" stroke-width="0.55" fill="none"/><path d="M218.3 267.6Q218.6 266.8 221.8 266.0" stroke="#8a8a8a" stroke-width="0.55" fill="none"/><path d="M88.1 216.6Q89.6 213.1 89.3 209.6" stroke="#6a6a6a" stroke-width="0.55" fill="none"/><path d="M71.2 322.5Q67.3 321.7 67.2 320.9" stroke="#8a8a8a" stroke-width="0.55" fill="none"/><path d="M49.6 290.2Q50.2 287.8 47.6 285.4" stroke="#6a6a6a" stroke-width="0.55" fill="none"/><path d="M88.5 225.6Q89.3 223.2 91.3 220.7" stroke="#999" stroke-width="0.55" fill="none"/><path d="M52.8 294.2Q55.9 293.4 55.5 292.5" stroke="#777" stroke-width="0.55" fill="none"/><path d="M132.7 264.9Q134.2 261.2 134.1 257.5" stroke="#999" stroke-width="0.55" fill="none"/><path d="M108.4 254.1Q107.8 250.1 109.4 246.1" stroke="#999" stroke-width="0.55" fill="none"/><path d="M57.6 349.3Q57.2 347.2 60.3 345.2" stroke="#8a8a8a" stroke-width="0.55" fill="none"/><path d="M131.2 327.7Q132.9 325.9 132.2 324.1" stroke="#6a6a6a" stroke-width="0.55" fill="none"/><path d="M273.6 277.4Q274.3 275.0 278.4 272.6" stroke="#8a8a8a" stroke-width="0.55" fill="none"/><path d="M90.8 358.7Q90.2 357.5 86.8 356.2" stroke="#8a8a8a" stroke-width="0.55" fill="none"/><path d="M124.8 319.1Q126.3 316.6 130.3 314.0" stroke="#8a8a8a" stroke-width="0.55" fill="none"/><path d="M220.9 287.5Q225.3 286.4 225.8 285.4" stroke="#777" stroke-width="0.55" fill="none"/><path d="M141.8 354.6Q140.4 350.5 141.9 346.4" stroke="#777" stroke-width="0.55" fill="none"/><path d="M181.6 194.9Q185.8 191.8 186.1 188.7" stroke="#6a6a6a" stroke-width="0.55" fill="none"/><path d="M261.4 297.7Q259.5 294.8 258.9 291.9" stroke="#999" stroke-width="0.55" fill="none"/><path d="M142.0 337.0Q140.7 333.5 138.5 329.9" stroke="#8a8a8a" stroke-width="0.55" fill="none"/><path d="M110.7 323.3Q112.4 321.6 111.2 319.8" stroke="#8a8a8a" stroke-width="0.55" fill="none"/><path d="M124.3 218.1Q126.4 216.1 127.3 214.0" stroke="#999" stroke-width="0.55" fill="none"/><path d="M250.1 326.4Q251.1 324.7 250.6 323.1" stroke="#8a8a8a" stroke-width="0.55" fill="none"/><path d="M262.6 317.5Q264.7 315.3 265.6 313.2" stroke="#999" stroke-width="0.55" fill="none"/><path d="M219.9 293.1Q219.3 290.5 216.5 287.9" stroke="#8a8a8a" stroke-width="0.55" fill="none"/><path d="M231.0 354.7Q231.2 351.9 229.4 349.1" stroke="#8a8a8a" stroke-width="0.55" fill="none"/><path d="M130.8 240.1Q130.4 237.2 132.4 234.4" stroke="#6a6a6a" stroke-width="0.55" fill="none"/><path d="M41.9 232.5Q38.2 231.4 38.4 230.2" stroke="#8a8a8a" stroke-width="0.55" fill="none"/><path d="M11.0 343.8Q10.4 341.4 6.7 338.9" stroke="#8a8a8a" stroke-width="0.55" fill="none"/><path d="M132.7 366.6Q132.7 364.0 135.2 361.5" stroke="#6a6a6a" stroke-width="0.55" fill="none"/><path d="M184.2 303.7Q183.5 300.8 183.5 297.8" stroke="#999" stroke-width="0.55" fill="none"/><path d="M27.8 204.3Q30.6 200.7 31.6 197.1" stroke="#999" stroke-width="0.55" fill="none"/><path d="M31.7 255.4Q33.4 254.3 33.7 253.1" stroke="#8a8a8a" stroke-width="0.55" fill="none"/><path d="M61.3 256.5Q56.3 254.6 55.2 252.6" stroke="#999" stroke-width="0.55" fill="none"/><path d="M272.6 300.9Q273.7 296.5 272.0 292.1" stroke="#999" stroke-width="0.55" fill="none"/><path d="M259.2 276.2Q258.3 274.9 253.7 273.6" stroke="#8a8a8a" stroke-width="0.55" fill="none"/><path d="M104.2 286.8Q107.9 285.9 108.7 285.0" stroke="#8a8a8a" stroke-width="0.55" fill="none"/><path d="M252.7 283.6Q257.5 281.5 259.2 279.5" stroke="#6a6a6a" stroke-width="0.55" fill="none"/><path d="M6.1 240.7Q7.0 238.5 10.5 236.4" stroke="#6a6a6a" stroke-width="0.55" fill="none"/><path d="M88.2 358.7Q87.8 356.3 90.9 353.9" stroke="#777" stroke-width="0.55" fill="none"/><path d="M270.2 254.8Q272.3 253.2 277.6 251.7" stroke="#8a8a8a" stroke-width="0.55" fill="none"/><path d="M83.1 311.0Q81.6 308.7 83.6 306.4" stroke="#6a6a6a" stroke-width="0.55" fill="none"/><path d="M133.0 218.8Q131.8 215.8 133.0 212.8" stroke="#6a6a6a" stroke-width="0.55" fill="none"/><path d="M207.2 223.0Q209.7 219.7 208.8 216.5" stroke="#6a6a6a" stroke-width="0.55" fill="none"/><path d="M117.9 220.8Q116.0 218.8 111.5 216.9" stroke="#6a6a6a" stroke-width="0.55" fill="none"/><path d="M179.8 364.0Q182.5 360.6 184.2 357.1" stroke="#8a8a8a" stroke-width="0.55" fill="none"/><path d="M265.2 213.6L262.7 209.9" stroke="#1a1a1a" stroke-width="0.8" fill="none"/><path d="M124.9 237.1L127.0 233.6" stroke="#1a1a1a" stroke-width="0.8" fill="none"/><path d="M198.5 312.1L198.6 302.6" stroke="#1a1a1a" stroke-width="0.8" fill="none"/><path d="M218.2 199.2L217.3 192.4" stroke="#1a1a1a" stroke-width="0.8" fill="none"/><path d="M16.4 365.7L17.1 361.3" stroke="#1a1a1a" stroke-width="0.8" fill="none"/><path d="M69.5 200.6L74.0 192.6" stroke="#1a1a1a" stroke-width="0.8" fill="none"/><path d="M188.2 301.9L184.7 294.2" stroke="#1a1a1a" stroke-width="0.8" fill="none"/><path d="M248.9 296.2L245.5 290.4" stroke="#1a1a1a" stroke-width="0.8" fill="none"/><path d="M15.3 365.2L10.9 360.6" stroke="#1a1a1a" stroke-width="0.8" fill="none"/><path d="M221.2 246.8L215.9 240.4" stroke="#1a1a1a" stroke-width="0.8" fill="none"/><path d="M156.6 329.1L158.9 322.0" stroke="#1a1a1a" stroke-width="0.8" fill="none"/><path d="M49.2 339.5L48.5 334.0" stroke="#1a1a1a" stroke-width="0.8" fill="none"/><path d="M32.9 268.6L36.3 260.0" stroke="#1a1a1a" stroke-width="0.8" fill="none"/><path d="M78.6 334.6L81.4 327.7" stroke="#1a1a1a" stroke-width="0.8" fill="none"/><path d="M39.5 213.4L37.5 205.5" stroke="#1a1a1a" stroke-width="0.8" fill="none"/><path d="M239.7 309.6L239.3 305.4" stroke="#1a1a1a" stroke-width="0.8" fill="none"/><path d="M56.9 237.6L54.4 230.6" stroke="#1a1a1a" stroke-width="0.8" fill="none"/><path d="M193.4 201.0L195.3 194.5" stroke="#1a1a1a" stroke-width="0.8" fill="none"/><path d="M270.8 328.2L265.5 322.7" stroke="#1a1a1a" stroke-width="0.8" fill="none"/><path d="M60.3 367.6L59.1 362.0" stroke="#1a1a1a" stroke-width="0.8" fill="none"/><path d="M92.2 278.4L95.8 273.1" stroke="#1a1a1a" stroke-width="0.8" fill="none"/><path d="M244.7 327.3L246.4 320.1" stroke="#1a1a1a" stroke-width="0.8" fill="none"/><path d="M225.1 302.9L224.5 298.8" stroke="#1a1a1a" stroke-width="0.8" fill="none"/><path d="M77.6 345.7L78.3 336.7" stroke="#1a1a1a" stroke-width="0.8" fill="none"/><path d="M122.6 236.2L120.8 228.0" stroke="#1a1a1a" stroke-width="0.8" fill="none"/><path d="M274.9 220.0L273.8 214.2" stroke="#1a1a1a" stroke-width="0.8" fill="none"/><path d="M71.0 328.6L66.4 324.3" stroke="#1a1a1a" stroke-width="0.8" fill="none"/><path d="M168.2 346.2L166.6 340.8" stroke="#1a1a1a" stroke-width="0.8" fill="none"/><path d="M123.7 229.9L122.3 222.3" stroke="#1a1a1a" stroke-width="0.8" fill="none"/><path d="M6.6 257.9L2.7 253.0" stroke="#1a1a1a" stroke-width="0.8" fill="none"/><path d="M230.8 350.9L232.0 343.9" stroke="#1a1a1a" stroke-width="0.8" fill="none"/><path d="M191.8 232.9L190.6 225.9" stroke="#1a1a1a" stroke-width="0.8" fill="none"/><path d="M210.0 352.0L211.0 347.4" stroke="#1a1a1a" stroke-width="0.8" fill="none"/><path d="M228.2 306.5L232.2 303.0" stroke="#1a1a1a" stroke-width="0.8" fill="none"/><path d="M106.1 308.8L110.1 304.0" stroke="#1a1a1a" stroke-width="0.8" fill="none"/><path d="M196.7 210.7L200.4 205.1" stroke="#1a1a1a" stroke-width="0.8" fill="none"/><path d="M279.8 370.8L280.5 361.9" stroke="#1a1a1a" stroke-width="0.8" fill="none"/><path d="M161.2 284.7L161.8 277.2" stroke="#1a1a1a" stroke-width="0.8" fill="none"/><path d="M62.5 303.1L65.6 296.3" stroke="#1a1a1a" stroke-width="0.8" fill="none"/><path d="M48.0 271.5L42.6 265.2" stroke="#1a1a1a" stroke-width="0.8" fill="none"/><path d="M256.4 316.0L259.2 313.0" stroke="#1a1a1a" stroke-width="0.8" fill="none"/><path d="M101.5 216.8L99.2 210.0" stroke="#1a1a1a" stroke-width="0.8" fill="none"/><path d="M217.8 357.3L218.9 349.6" stroke="#1a1a1a" stroke-width="0.8" fill="none"/><path d="M18.1 290.7L19.9 286.7" stroke="#1a1a1a" stroke-width="0.8" fill="none"/><path d="M227.3 240.4L222.6 236.0" stroke="#1a1a1a" stroke-width="0.8" fill="none"/><path d="M209.1 258.8L202.4 253.1" stroke="#1a1a1a" stroke-width="0.8" fill="none"/><path d="M211.1 215.0L211.3 209.8" stroke="#1a1a1a" stroke-width="0.8" fill="none"/><path d="M31.6 209.7L29.7 202.2" stroke="#1a1a1a" stroke-width="0.8" fill="none"/><path d="M153.0 326.7L159.2 319.8" stroke="#1a1a1a" stroke-width="0.8" fill="none"/><path d="M264.9 364.3L266.4 360.4" stroke="#1a1a1a" stroke-width="0.8" fill="none"/><path d="M0.7 357.4L0.2 352.7" stroke="#1a1a1a" stroke-width="0.8" fill="none"/><path d="M220.5 224.9L219.6 218.9" stroke="#1a1a1a" stroke-width="0.8" fill="none"/><path d="M112.0 372.7L107.7 365.6" stroke="#1a1a1a" stroke-width="0.8" fill="none"/><path d="M245.9 312.2L249.2 305.0" stroke="#1a1a1a" stroke-width="0.8" fill="none"/><path d="M57.5 239.7L61.6 233.0" stroke="#1a1a1a" stroke-width="0.8" fill="none"/><path d="M69.3 230.2L62.6 222.8" stroke="#1a1a1a" stroke-width="0.8" fill="none"/><path d="M27.0 222.4L24.2 219.5" stroke="#1a1a1a" stroke-width="0.8" fill="none"/><path d="M181.8 247.6L185.3 244.5" stroke="#1a1a1a" stroke-width="0.8" fill="none"/><path d="M48.4 239.3L45.0 234.2" stroke="#1a1a1a" stroke-width="0.8" fill="none"/><path d="M188.3 274.6L187.1 266.2" stroke="#1a1a1a" stroke-width="0.8" fill="none"/><path d="M68.2 327.5L71.0 323.5" stroke="#1a1a1a" stroke-width="0.8" fill="none"/><path d="M49.5 295.3L46.5 290.9" stroke="#1a1a1a" stroke-width="0.8" fill="none"/><path d="M248.8 315.1L249.2 308.1" stroke="#1a1a1a" stroke-width="0.8" fill="none"/><path d="M201.3 212.1L201.2 206.0" stroke="#1a1a1a" stroke-width="0.8" fill="none"/><path d="M11.2 212.8L9.7 208.7" stroke="#1a1a1a" stroke-width="0.8" fill="none"/><path d="M270.5 342.3L265.9 337.3" stroke="#1a1a1a" stroke-width="0.8" fill="none"/><path d="M269.7 308.6L269.6 302.6" stroke="#1a1a1a" stroke-width="0.8" fill="none"/><path d="M67.6 229.8L68.1 225.5" stroke="#1a1a1a" stroke-width="0.8" fill="none"/><path d="M95.9 360.7L98.3 357.2" stroke="#1a1a1a" stroke-width="0.8" fill="none"/><path d="M233.8 346.2L235.5 336.8" stroke="#1a1a1a" stroke-width="0.8" fill="none"/><path d="M234.4 313.7L239.2 308.3" stroke="#1a1a1a" stroke-width="0.8" fill="none"/><path d="M206.0 283.8L206.5 276.1" stroke="#1a1a1a" stroke-width="0.8" fill="none"/><path d="M149.6 285.4L150.4 277.1" stroke="#1a1a1a" stroke-width="0.8" fill="none"/><path d="M91.0 224.4L91.7 219.2" stroke="#1a1a1a" stroke-width="0.8" fill="none"/><path d="M170.7 197.5L171.6 192.7" stroke="#1a1a1a" stroke-width="0.8" fill="none"/><path d="M32.2 311.9L36.9 303.7" stroke="#1a1a1a" stroke-width="0.8" fill="none"/><path d="M220.3 295.4L222.7 290.8" stroke="#1a1a1a" stroke-width="0.8" fill="none"/><path d="M76.4 364.4L78.2 354.8" stroke="#1a1a1a" stroke-width="0.8" fill="none"/><path d="M159.9 225.4L156.8 220.0" stroke="#1a1a1a" stroke-width="0.8" fill="none"/><path d="M22.3 214.6L22.7 206.1" stroke="#1a1a1a" stroke-width="0.8" fill="none"/><path d="M3.1 369.1L-3.7 363.0" stroke="#1a1a1a" stroke-width="0.8" fill="none"/><path d="M187.8 235.2L186.6 227.4" stroke="#1a1a1a" stroke-width="0.8" fill="none"/><path d="M253.0 292.0L252.7 282.9" stroke="#1a1a1a" stroke-width="0.8" fill="none"/><path d="M16.1 244.7L19.4 241.3" stroke="#1a1a1a" stroke-width="0.8" fill="none"/><path d="M63.2 339.9L65.4 333.8" stroke="#1a1a1a" stroke-width="0.8" fill="none"/><path d="M8.5 212.1L10.3 208.0" stroke="#1a1a1a" stroke-width="0.8" fill="none"/><path d="M118.2 217.6L120.6 212.3" stroke="#1a1a1a" stroke-width="0.8" fill="none"/><path d="M157.6 309.3L152.3 303.1" stroke="#1a1a1a" stroke-width="0.8" fill="none"/><path d="M271.5 269.8L274.8 266.0" stroke="#1a1a1a" stroke-width="0.8" fill="none"/><path d="M190.0 312.5L186.8 308.6" stroke="#1a1a1a" stroke-width="0.8" fill="none"/><path d="M216.6 237.4L215.7 233.0" stroke="#1a1a1a" stroke-width="0.8" fill="none"/><path d="M122.1 303.8L122.6 296.8" stroke="#1a1a1a" stroke-width="0.8" fill="none"/><path d="M61.7 238.4L65.0 229.4" stroke="#1a1a1a" stroke-width="0.8" fill="none"/><path d="M213.7 339.2L210.6 334.4" stroke="#1a1a1a" stroke-width="0.8" fill="none"/><path d="M4.3 235.3L7.5 231.9" stroke="#1a1a1a" stroke-width="0.8" fill="none"/><path d="M238.7 253.8L243.7 247.1" stroke="#1a1a1a" stroke-width="0.8" fill="none"/><path d="M221.2 206.1L221.2 201.7" stroke="#1a1a1a" stroke-width="0.8" fill="none"/><path d="M51.3 373.5L54.4 370.0" stroke="#1a1a1a" stroke-width="0.8" fill="none"/><path d="M166.6 253.2L169.6 250.1" stroke="#1a1a1a" stroke-width="0.8" fill="none"/><path d="M110.5 309.1L112.6 304.4" stroke="#1a1a1a" stroke-width="0.8" fill="none"/><path d="M65.3 309.9L67.1 306.0" stroke="#1a1a1a" stroke-width="0.8" fill="none"/><path d="M171.6 273.7L168.3 269.7" stroke="#1a1a1a" stroke-width="0.8" fill="none"/><path d="M28.3 312.1L26.3 306.0" stroke="#1a1a1a" stroke-width="0.8" fill="none"/><path d="M160.1 260.5L165.4 254.1" stroke="#1a1a1a" stroke-width="0.8" fill="none"/><path d="M24.0 302.7L24.0 296.4" stroke="#1a1a1a" stroke-width="0.8" fill="none"/><path d="M245.6 335.9L244.4 330.1" stroke="#1a1a1a" stroke-width="0.8" fill="none"/><path d="M27.9 288.5L29.8 280.9" stroke="#1a1a1a" stroke-width="0.8" fill="none"/><path d="M84.9 245.5L80.0 239.0" stroke="#1a1a1a" stroke-width="0.8" fill="none"/><path d="M64.8 270.4L67.7 261.5" stroke="#1a1a1a" stroke-width="0.8" fill="none"/><path d="M75.1 362.2L72.8 358.2" stroke="#1a1a1a" stroke-width="0.8" fill="none"/><path d="M113.3 316.6L118.0 311.4" stroke="#1a1a1a" stroke-width="0.8" fill="none"/><path d="M164.4 336.3L170.2 329.3" stroke="#1a1a1a" stroke-width="0.8" fill="none"/><path d="M88.7 352.8L81.9 346.2" stroke="#1a1a1a" stroke-width="0.8" fill="none"/><path d="M253.7 279.6L251.6 272.4" stroke="#1a1a1a" stroke-width="0.8" fill="none"/><path d="M125.9 219.5L122.3 214.0" stroke="#1a1a1a" stroke-width="0.8" fill="none"/><path d="M226.0 337.3L227.9 332.5" stroke="#1a1a1a" stroke-width="0.8" fill="none"/><path d="M227.0 204.4L222.4 197.9" stroke="#1a1a1a" stroke-width="0.8" fill="none"/><path d="M252.8 212.8L252.7 207.0" stroke="#1a1a1a" stroke-width="0.8" fill="none"/><path d="M119.5 230.0L115.5 224.2" stroke="#1a1a1a" stroke-width="0.8" fill="none"/><path d="M152.5 194.3L151.4 185.0" stroke="#1a1a1a" stroke-width="0.8" fill="none"/><path d="M260.8 306.5L260.0 299.4" stroke="#1a1a1a" stroke-width="0.8" fill="none"/><path d="M182.1 266.9L181.9 257.8" stroke="#1a1a1a" stroke-width="0.8" fill="none"/><path d="M9.7 322.5L6.9 318.4" stroke="#1a1a1a" stroke-width="0.8" fill="none"/><path d="M11.9 271.5L10.6 267.7" stroke="#1a1a1a" stroke-width="0.8" fill="none"/><path d="M87.4 309.6L81.8 304.3" stroke="#1a1a1a" stroke-width="0.8" fill="none"/><path d="M260.0 243.5L261.7 236.5" stroke="#1a1a1a" stroke-width="0.8" fill="none"/><path d="M138.3 242.0L138.9 235.5" stroke="#1a1a1a" stroke-width="0.8" fill="none"/><path d="M196.8 274.9L190.8 269.5" stroke="#1a1a1a" stroke-width="0.8" fill="none"/><path d="M246.5 351.5L242.7 345.5" stroke="#1a1a1a" stroke-width="0.8" fill="none"/><path d="M206.8 356.0L200.9 348.3" stroke="#1a1a1a" stroke-width="0.8" fill="none"/><path d="M167.5 282.9L171.0 275.1" stroke="#1a1a1a" stroke-width="0.8" fill="none"/><path d="M100.2 209.6L96.9 201.6" stroke="#1a1a1a" stroke-width="0.8" fill="none"/><path d="M196.6 234.1L197.1 229.6" stroke="#1a1a1a" stroke-width="0.8" fill="none"/><path d="M244.7 252.1L245.3 247.7" stroke="#1a1a1a" stroke-width="0.8" fill="none"/><path d="M233.8 285.8L233.6 281.3" stroke="#1a1a1a" stroke-width="0.8" fill="none"/><path d="M34.0 303.0L31.5 299.0" stroke="#1a1a1a" stroke-width="0.8" fill="none"/><path d="M127.3 293.9L128.9 284.6" stroke="#1a1a1a" stroke-width="0.8" fill="none"/><path d="M17.3 364.9L19.9 360.8" stroke="#1a1a1a" stroke-width="0.8" fill="none"/><path d="M243.9 250.4L245.3 244.6" stroke="#1a1a1a" stroke-width="0.8" fill="none"/><path d="M165.8 350.1L170.6 344.7" stroke="#1a1a1a" stroke-width="0.8" fill="none"/><path d="M140.8 195.1L143.9 187.2" stroke="#1a1a1a" stroke-width="0.8" fill="none"/><path d="M108.1 312.4L106.2 304.9" stroke="#1a1a1a" stroke-width="0.8" fill="none"/><path d="M90.9 238.9L98.2 232.2" stroke="#1a1a1a" stroke-width="0.8" fill="none"/><path d="M88.5 226.4L94.5 221.3" stroke="#1a1a1a" stroke-width="0.8" fill="none"/><path d="M190.7 341.5L195.9 336.5" stroke="#1a1a1a" stroke-width="0.8" fill="none"/><path d="M69.8 303.6L68.5 298.5" stroke="#1a1a1a" stroke-width="0.8" fill="none"/><path d="M135.1 239.9L131.1 232.2" stroke="#1a1a1a" stroke-width="0.8" fill="none"/><path d="M208.2 363.3L206.8 359.5" stroke="#1a1a1a" stroke-width="0.8" fill="none"/><path d="M115.5 223.7L119.9 219.5" stroke="#1a1a1a" stroke-width="0.8" fill="none"/><path d="M158.5 261.7L154.6 257.6" stroke="#1a1a1a" stroke-width="0.8" fill="none"/><path d="M219.6 306.5L214.6 300.4" stroke="#1a1a1a" stroke-width="0.8" fill="none"/><path d="M216.5 207.7L212.9 201.6" stroke="#1a1a1a" stroke-width="0.8" fill="none"/><path d="M271.4 236.0L269.9 231.5" stroke="#1a1a1a" stroke-width="0.8" fill="none"/><path d="M45.8 335.1L47.7 329.5" stroke="#1a1a1a" stroke-width="0.8" fill="none"/><path d="M195.4 247.4L193.3 240.5" stroke="#1a1a1a" stroke-width="0.8" fill="none"/><path d="M128.4 221.9L128.3 213.0" stroke="#1a1a1a" stroke-width="0.8" fill="none"/></g>
<rect x="0" y="180" width="280" height="194" fill="url(#shade)"/>
<polygon points="98.7,219.2 111.0,216.3 130.0,214.8 149.0,218.0 164.4,222.0 177.7,225.9 206.0,229.7 214.0,225.0 233.0,226.0 248.0,230.6 263.0,235.4 280.0,239.2 280.0,256.3 259.6,260.0 252.0,262.0 255.8,271.6 244.4,273.5 225.3,266.8 217.7,260.0 202.5,257.3 193.0,256.3 181.5,249.7 164.4,246.8 160.6,243.0 149.0,245.0 139.6,239.0 120.6,231.6 98.7,227.8" fill="#a80e0e" opacity="0.9" filter="url(#bl)"/>
<g filter="url(#bl)" opacity="0.95"><circle cx="180.2" cy="246.8" r="2.9" fill="#ff2424"/><circle cx="184.5" cy="250.3" r="1.8" fill="#ff2424"/><circle cx="246.0" cy="255.4" r="1.6" fill="#ff2424"/><circle cx="274.5" cy="252.9" r="2.4" fill="#f01818"/><circle cx="258.8" cy="249.4" r="2.7" fill="#ff1c1c"/><circle cx="192.5" cy="252.0" r="2.2" fill="#f41a1a"/><circle cx="171.8" cy="246.3" r="2.9" fill="#e41010"/><circle cx="227.2" cy="231.2" r="1.8" fill="#ff1c1c"/><circle cx="116.9" cy="217.9" r="1.9" fill="#e41010"/><circle cx="264.5" cy="241.1" r="3.0" fill="#ff2424"/><circle cx="174.2" cy="247.2" r="1.8" fill="#f41a1a"/><circle cx="142.3" cy="217.5" r="1.6" fill="#c80c0c"/><circle cx="174.1" cy="235.6" r="2.1" fill="#f01818"/><circle cx="276.4" cy="248.9" r="3.0" fill="#e41010"/><circle cx="135.8" cy="236.2" r="2.8" fill="#f41a1a"/><circle cx="249.8" cy="235.7" r="1.6" fill="#f01818"/><circle cx="207.6" cy="234.8" r="2.2" fill="#e81414"/><circle cx="186.0" cy="247.8" r="2.8" fill="#f01818"/><circle cx="212.4" cy="230.9" r="1.8" fill="#e81414"/><circle cx="142.9" cy="223.1" r="2.6" fill="#e81414"/><circle cx="259.3" cy="249.6" r="2.1" fill="#e41010"/><circle cx="169.1" cy="237.9" r="2.9" fill="#ff2424"/><circle cx="151.0" cy="222.2" r="2.6" fill="#e41010"/><circle cx="217.2" cy="250.4" r="1.6" fill="#f01818"/><circle cx="129.4" cy="234.6" r="2.4" fill="#f01818"/><circle cx="114.0" cy="219.9" r="2.2" fill="#ff1c1c"/><circle cx="217.9" cy="255.2" r="2.4" fill="#f01818"/><circle cx="184.4" cy="233.9" r="2.0" fill="#e41010"/><circle cx="232.6" cy="268.6" r="2.6" fill="#f41a1a"/><circle cx="254.7" cy="271.4" r="1.5" fill="#ff2424"/><circle cx="202.4" cy="251.0" r="2.1" fill="#e81414"/><circle cx="113.7" cy="218.4" r="1.9" fill="#ff2424"/><circle cx="231.0" cy="235.9" r="2.6" fill="#e81414"/><circle cx="181.2" cy="240.6" r="2.3" fill="#e81414"/><circle cx="207.6" cy="241.8" r="1.8" fill="#f41a1a"/><circle cx="218.5" cy="242.1" r="2.8" fill="#ff1c1c"/><circle cx="134.3" cy="221.9" r="2.9" fill="#f41a1a"/><circle cx="268.2" cy="242.9" r="1.9" fill="#ff2424"/><circle cx="155.2" cy="219.7" r="2.2" fill="#c80c0c"/><circle cx="249.9" cy="235.5" r="2.3" fill="#f41a1a"/><circle cx="277.7" cy="240.0" r="1.6" fill="#e41010"/><circle cx="221.8" cy="229.0" r="2.0" fill="#f41a1a"/><circle cx="140.7" cy="220.0" r="1.6" fill="#f41a1a"/><circle cx="118.2" cy="218.0" r="2.3" fill="#f41a1a"/><circle cx="245.6" cy="272.3" r="2.5" fill="#f01818"/><circle cx="228.4" cy="259.3" r="2.3" fill="#e41010"/><circle cx="130.0" cy="228.4" r="2.0" fill="#f41a1a"/><circle cx="271.2" cy="243.0" r="3.0" fill="#f01818"/><circle cx="268.6" cy="257.2" r="1.7" fill="#ff2424"/><circle cx="217.1" cy="243.2" r="2.7" fill="#ff1c1c"/><circle cx="247.6" cy="252.1" r="2.6" fill="#f01818"/><circle cx="141.6" cy="236.0" r="1.6" fill="#ff1c1c"/><circle cx="254.5" cy="233.3" r="1.6" fill="#ff2424"/><circle cx="159.9" cy="238.0" r="1.9" fill="#e41010"/><circle cx="195.1" cy="254.9" r="2.9" fill="#ff2424"/><circle cx="230.1" cy="264.8" r="2.5" fill="#ff2424"/><circle cx="203.5" cy="255.1" r="2.6" fill="#ff2424"/><circle cx="193.9" cy="229.6" r="2.6" fill="#f41a1a"/><circle cx="257.1" cy="250.0" r="2.0" fill="#f01818"/><circle cx="275.2" cy="244.6" r="2.4" fill="#f01818"/><circle cx="265.8" cy="245.8" r="3.0" fill="#e41010"/><circle cx="262.7" cy="241.5" r="2.0" fill="#f01818"/><circle cx="188.9" cy="248.3" r="2.8" fill="#e81414"/><circle cx="143.1" cy="223.7" r="2.3" fill="#ff2424"/><circle cx="248.8" cy="250.4" r="2.3" fill="#c80c0c"/><circle cx="213.2" cy="251.9" r="2.3" fill="#c80c0c"/><circle cx="196.9" cy="248.5" r="1.7" fill="#f41a1a"/><circle cx="212.5" cy="233.2" r="1.8" fill="#e81414"/><circle cx="250.1" cy="238.0" r="2.7" fill="#f01818"/><circle cx="201.9" cy="233.9" r="2.7" fill="#ff1c1c"/><circle cx="236.5" cy="243.2" r="2.5" fill="#f01818"/><circle cx="244.7" cy="241.9" r="1.5" fill="#c80c0c"/><circle cx="198.5" cy="243.9" r="2.4" fill="#f01818"/><circle cx="131.9" cy="218.4" r="1.8" fill="#f01818"/><circle cx="272.1" cy="240.6" r="2.6" fill="#ff1c1c"/><circle cx="168.9" cy="238.3" r="2.0" fill="#f01818"/><circle cx="226.0" cy="265.0" r="1.8" fill="#ff2424"/><circle cx="163.2" cy="234.7" r="2.9" fill="#e81414"/><circle cx="244.5" cy="256.1" r="2.8" fill="#f41a1a"/><circle cx="269.9" cy="247.5" r="1.8" fill="#e81414"/><circle cx="234.0" cy="260.8" r="2.7" fill="#ff2424"/><circle cx="196.2" cy="234.7" r="2.1" fill="#f01818"/><circle cx="270.8" cy="253.6" r="2.0" fill="#f41a1a"/><circle cx="116.9" cy="226.2" r="2.2" fill="#e81414"/><circle cx="106.3" cy="223.5" r="2.1" fill="#e41010"/><circle cx="144.6" cy="228.6" r="2.0" fill="#e81414"/><circle cx="188.2" cy="250.1" r="1.6" fill="#ff2424"/><circle cx="174.4" cy="244.7" r="2.4" fill="#ff1c1c"/><circle cx="194.6" cy="241.9" r="1.9" fill="#ff1c1c"/><circle cx="219.1" cy="258.9" r="1.5" fill="#c80c0c"/><circle cx="176.0" cy="241.6" r="3.0" fill="#f01818"/><circle cx="246.1" cy="269.2" r="1.7" fill="#c80c0c"/><circle cx="214.7" cy="254.6" r="2.0" fill="#f41a1a"/><circle cx="140.9" cy="218.3" r="2.8" fill="#c80c0c"/><circle cx="230.4" cy="255.7" r="1.8" fill="#ff1c1c"/><circle cx="146.9" cy="238.2" r="2.4" fill="#e41010"/><circle cx="138.0" cy="228.8" r="2.6" fill="#f41a1a"/><circle cx="126.6" cy="226.0" r="3.0" fill="#ff2424"/><circle cx="266.4" cy="238.4" r="2.1" fill="#e41010"/><circle cx="182.0" cy="231.7" r="2.3" fill="#ff2424"/><circle cx="200.8" cy="242.0" r="2.5" fill="#ff1c1c"/><circle cx="208.1" cy="255.5" r="2.2" fill="#c80c0c"/><circle cx="224.7" cy="229.1" r="1.7" fill="#ff1c1c"/><circle cx="217.9" cy="231.9" r="2.9" fill="#ff1c1c"/><circle cx="227.5" cy="247.4" r="2.9" fill="#f41a1a"/><circle cx="265.1" cy="239.0" r="2.7" fill="#ff1c1c"/><circle cx="221.6" cy="248.4" r="2.7" fill="#f41a1a"/><circle cx="236.6" cy="267.4" r="1.9" fill="#e41010"/><circle cx="126.2" cy="229.9" r="1.5" fill="#c80c0c"/><circle cx="112.5" cy="216.2" r="2.6" fill="#ff1c1c"/><circle cx="216.4" cy="226.7" r="1.8" fill="#c80c0c"/><circle cx="181.5" cy="233.4" r="2.7" fill="#ff1c1c"/><circle cx="220.7" cy="242.6" r="2.3" fill="#f41a1a"/><circle cx="222.9" cy="231.5" r="2.1" fill="#e81414"/><circle cx="131.0" cy="224.9" r="1.9" fill="#f41a1a"/><circle cx="183.8" cy="243.6" r="2.2" fill="#ff1c1c"/><circle cx="269.5" cy="251.1" r="2.9" fill="#e81414"/><circle cx="185.2" cy="227.7" r="2.8" fill="#ff1c1c"/><circle cx="218.5" cy="260.4" r="1.6" fill="#c80c0c"/><circle cx="167.8" cy="244.8" r="2.3" fill="#ff1c1c"/><circle cx="179.8" cy="226.8" r="2.1" fill="#c80c0c"/><circle cx="125.9" cy="221.0" r="2.0" fill="#ff1c1c"/><circle cx="211.0" cy="244.0" r="1.6" fill="#e81414"/><circle cx="248.1" cy="265.2" r="2.7" fill="#e41010"/><circle cx="234.7" cy="245.8" r="2.3" fill="#e41010"/><circle cx="242.2" cy="237.7" r="2.9" fill="#e41010"/><circle cx="240.8" cy="239.2" r="1.6" fill="#ff2424"/><circle cx="153.2" cy="240.9" r="2.6" fill="#ff1c1c"/><circle cx="110.7" cy="220.0" r="2.5" fill="#f41a1a"/><circle cx="249.7" cy="252.9" r="1.5" fill="#ff2424"/><circle cx="228.0" cy="241.4" r="1.9" fill="#e41010"/><circle cx="150.4" cy="235.1" r="2.3" fill="#ff1c1c"/><circle cx="131.7" cy="235.1" r="1.7" fill="#ff1c1c"/><circle cx="270.9" cy="247.0" r="2.6" fill="#ff1c1c"/><circle cx="179.2" cy="235.5" r="1.7" fill="#e81414"/><circle cx="138.7" cy="221.1" r="1.7" fill="#ff2424"/><circle cx="238.9" cy="232.9" r="2.7" fill="#e81414"/><circle cx="122.6" cy="224.1" r="1.7" fill="#f41a1a"/><circle cx="168.0" cy="232.2" r="2.1" fill="#e41010"/><circle cx="230.8" cy="250.2" r="2.0" fill="#c80c0c"/><circle cx="242.3" cy="253.3" r="2.4" fill="#e41010"/><circle cx="145.0" cy="223.1" r="2.0" fill="#ff2424"/><circle cx="248.8" cy="250.1" r="1.7" fill="#c80c0c"/><circle cx="196.1" cy="230.1" r="1.9" fill="#e81414"/><circle cx="270.9" cy="251.1" r="1.8" fill="#e41010"/><circle cx="173.8" cy="232.3" r="1.6" fill="#c80c0c"/><circle cx="163.5" cy="240.6" r="1.7" fill="#f41a1a"/><circle cx="197.0" cy="246.9" r="2.3" fill="#ff1c1c"/><circle cx="180.6" cy="236.8" r="2.7" fill="#f41a1a"/><circle cx="252.9" cy="269.0" r="2.4" fill="#f41a1a"/><circle cx="201.5" cy="232.3" r="2.5" fill="#e41010"/><circle cx="229.8" cy="261.4" r="2.1" fill="#ff2424"/><circle cx="207.4" cy="241.1" r="2.1" fill="#e81414"/><circle cx="265.0" cy="247.1" r="2.1" fill="#ff1c1c"/><circle cx="251.2" cy="265.7" r="2.1" fill="#ff2424"/><circle cx="118.6" cy="218.3" r="2.9" fill="#ff1c1c"/><circle cx="193.6" cy="238.7" r="2.9" fill="#ff1c1c"/><circle cx="210.4" cy="238.7" r="2.1" fill="#ff1c1c"/><circle cx="235.3" cy="230.5" r="2.4" fill="#e41010"/><circle cx="275.9" cy="241.4" r="1.7" fill="#f01818"/><circle cx="197.3" cy="253.0" r="2.9" fill="#e41010"/><circle cx="257.4" cy="234.6" r="2.3" fill="#e81414"/><circle cx="234.4" cy="247.3" r="2.9" fill="#e41010"/><circle cx="259.3" cy="247.9" r="2.2" fill="#ff1c1c"/><circle cx="141.9" cy="230.2" r="2.0" fill="#e41010"/><circle cx="178.1" cy="239.8" r="2.3" fill="#f01818"/><circle cx="276.8" cy="241.2" r="1.8" fill="#ff1c1c"/><circle cx="255.1" cy="255.3" r="1.6" fill="#ff1c1c"/><circle cx="251.2" cy="233.7" r="2.2" fill="#f01818"/><circle cx="213.9" cy="255.7" r="2.3" fill="#e81414"/><circle cx="257.0" cy="256.6" r="1.7" fill="#f41a1a"/><circle cx="224.2" cy="228.2" r="2.6" fill="#e81414"/><circle cx="259.7" cy="248.8" r="1.8" fill="#ff1c1c"/><circle cx="138.6" cy="219.5" r="2.5" fill="#ff2424"/><circle cx="277.9" cy="239.2" r="2.3" fill="#e81414"/><circle cx="204.9" cy="245.4" r="2.1" fill="#e81414"/><circle cx="113.0" cy="229.2" r="2.6" fill="#f01818"/><circle cx="234.0" cy="245.0" r="2.4" fill="#c80c0c"/><circle cx="140.3" cy="239.2" r="2.7" fill="#c80c0c"/><circle cx="228.8" cy="257.2" r="1.9" fill="#e81414"/><circle cx="206.8" cy="256.7" r="2.4" fill="#c80c0c"/><circle cx="208.9" cy="249.9" r="2.7" fill="#e81414"/><circle cx="178.3" cy="227.8" r="2.7" fill="#e41010"/><circle cx="118.0" cy="222.4" r="2.5" fill="#e81414"/><circle cx="123.9" cy="230.9" r="1.6" fill="#ff1c1c"/><circle cx="247.8" cy="258.3" r="2.7" fill="#c80c0c"/><circle cx="143.9" cy="221.2" r="2.5" fill="#c80c0c"/><circle cx="206.6" cy="240.1" r="2.0" fill="#ff2424"/><circle cx="164.1" cy="224.8" r="3.0" fill="#e41010"/><circle cx="234.0" cy="244.4" r="3.0" fill="#e41010"/><circle cx="151.8" cy="238.2" r="1.6" fill="#e41010"/><circle cx="222.1" cy="256.9" r="3.0" fill="#e81414"/><circle cx="139.3" cy="227.2" r="2.3" fill="#f01818"/><circle cx="138.8" cy="230.8" r="2.9" fill="#e81414"/><circle cx="137.2" cy="221.3" r="2.4" fill="#e41010"/><circle cx="232.7" cy="247.3" r="2.9" fill="#e81414"/><circle cx="255.2" cy="270.9" r="1.8" fill="#ff2424"/><circle cx="160.9" cy="222.8" r="2.3" fill="#f01818"/><circle cx="185.4" cy="236.6" r="2.4" fill="#c80c0c"/><circle cx="153.8" cy="239.6" r="3.0" fill="#f41a1a"/><circle cx="196.4" cy="237.8" r="1.6" fill="#ff1c1c"/><circle cx="163.8" cy="228.6" r="1.5" fill="#f01818"/><circle cx="233.5" cy="243.8" r="2.4" fill="#f41a1a"/><circle cx="228.6" cy="228.2" r="2.0" fill="#f01818"/><circle cx="231.0" cy="260.7" r="1.7" fill="#f01818"/><circle cx="238.8" cy="244.2" r="1.6" fill="#ff2424"/><circle cx="208.9" cy="242.3" r="1.8" fill="#e81414"/><circle cx="154.5" cy="238.1" r="2.3" fill="#f01818"/><circle cx="192.1" cy="246.1" r="2.0" fill="#ff2424"/><circle cx="134.7" cy="228.9" r="2.6" fill="#ff2424"/><circle cx="234.5" cy="241.9" r="1.5" fill="#c80c0c"/><circle cx="175.7" cy="236.1" r="1.6" fill="#ff2424"/><circle cx="238.4" cy="233.4" r="2.6" fill="#e81414"/><circle cx="204.2" cy="255.9" r="2.3" fill="#f41a1a"/><circle cx="165.7" cy="230.0" r="2.7" fill="#f01818"/><circle cx="215.2" cy="235.6" r="2.0" fill="#ff1c1c"/><circle cx="222.8" cy="228.5" r="2.2" fill="#ff2424"/><circle cx="132.4" cy="225.6" r="2.5" fill="#f01818"/><circle cx="248.5" cy="267.6" r="2.5" fill="#c80c0c"/><circle cx="158.4" cy="233.2" r="2.8" fill="#ff1c1c"/><circle cx="132.4" cy="221.3" r="2.0" fill="#f41a1a"/><circle cx="187.3" cy="247.1" r="2.1" fill="#ff1c1c"/><circle cx="188.7" cy="252.4" r="2.0" fill="#f41a1a"/><circle cx="109.6" cy="217.5" r="2.6" fill="#e41010"/><circle cx="253.2" cy="243.8" r="2.5" fill="#e41010"/><circle cx="243.5" cy="236.1" r="2.6" fill="#ff1c1c"/><circle cx="233.2" cy="228.2" r="1.7" fill="#f01818"/><circle cx="139.5" cy="222.8" r="1.5" fill="#e81414"/><circle cx="224.7" cy="261.6" r="2.9" fill="#ff1c1c"/><circle cx="223.5" cy="237.8" r="2.4" fill="#ff2424"/><circle cx="122.5" cy="221.1" r="3.0" fill="#c80c0c"/><circle cx="185.9" cy="234.9" r="2.0" fill="#c80c0c"/><circle cx="257.0" cy="252.6" r="1.8" fill="#f41a1a"/><circle cx="224.7" cy="245.9" r="2.7" fill="#f01818"/><circle cx="259.0" cy="238.7" r="1.7" fill="#e41010"/><circle cx="147.4" cy="236.6" r="2.0" fill="#e41010"/><circle cx="185.7" cy="234.4" r="1.9" fill="#e41010"/><circle cx="237.0" cy="253.9" r="1.5" fill="#ff1c1c"/><circle cx="186.1" cy="237.5" r="2.7" fill="#ff2424"/><circle cx="143.4" cy="223.1" r="1.9" fill="#f01818"/><circle cx="279.9" cy="239.4" r="2.8" fill="#f41a1a"/><circle cx="270.8" cy="245.5" r="2.5" fill="#ff1c1c"/><circle cx="154.0" cy="243.9" r="1.5" fill="#f01818"/><circle cx="238.1" cy="228.0" r="1.9" fill="#f41a1a"/><circle cx="188.1" cy="230.7" r="2.3" fill="#f41a1a"/><circle cx="138.8" cy="235.9" r="2.1" fill="#f41a1a"/><circle cx="212.4" cy="239.8" r="2.0" fill="#e41010"/><circle cx="233.7" cy="246.0" r="2.5" fill="#f01818"/><circle cx="165.6" cy="222.7" r="1.5" fill="#ff2424"/><circle cx="189.5" cy="236.8" r="2.0" fill="#e81414"/><circle cx="251.5" cy="259.7" r="1.5" fill="#f01818"/><circle cx="137.4" cy="237.1" r="2.6" fill="#f01818"/><circle cx="231.4" cy="253.4" r="2.9" fill="#e41010"/><circle cx="212.7" cy="243.3" r="2.4" fill="#e41010"/><circle cx="233.9" cy="238.9" r="2.2" fill="#c80c0c"/><circle cx="167.8" cy="225.7" r="2.4" fill="#e81414"/><circle cx="194.2" cy="239.9" r="1.9" fill="#e41010"/><circle cx="279.2" cy="242.4" r="1.9" fill="#c80c0c"/><circle cx="123.2" cy="218.3" r="1.7" fill="#ff1c1c"/><circle cx="257.1" cy="256.5" r="1.9" fill="#c80c0c"/><circle cx="161.2" cy="224.3" r="1.5" fill="#ff2424"/><circle cx="133.1" cy="228.9" r="2.5" fill="#e41010"/><circle cx="236.3" cy="267.1" r="1.6" fill="#ff2424"/><circle cx="254.3" cy="260.3" r="2.3" fill="#e41010"/><circle cx="118.6" cy="222.6" r="2.1" fill="#c80c0c"/><circle cx="222.5" cy="240.8" r="2.2" fill="#e41010"/><circle cx="220.0" cy="238.6" r="1.5" fill="#ff1c1c"/><circle cx="225.8" cy="265.1" r="2.9" fill="#f41a1a"/><circle cx="208.0" cy="255.5" r="1.8" fill="#f01818"/><circle cx="104.6" cy="228.8" r="1.9" fill="#ff1c1c"/><circle cx="209.2" cy="233.9" r="1.8" fill="#e41010"/><circle cx="224.3" cy="258.1" r="2.0" fill="#ff1c1c"/><circle cx="110.1" cy="228.0" r="2.1" fill="#e81414"/><circle cx="172.3" cy="240.2" r="2.3" fill="#e41010"/><circle cx="221.5" cy="240.1" r="2.9" fill="#ff2424"/><circle cx="164.5" cy="232.3" r="2.4" fill="#f41a1a"/><circle cx="224.9" cy="254.0" r="1.9" fill="#ff2424"/><circle cx="256.4" cy="235.8" r="1.9" fill="#e41010"/><circle cx="248.0" cy="265.4" r="2.4" fill="#e81414"/><circle cx="218.0" cy="240.0" r="1.8" fill="#c80c0c"/><circle cx="163.9" cy="235.0" r="2.6" fill="#f41a1a"/><circle cx="247.1" cy="266.9" r="2.5" fill="#f01818"/><circle cx="183.3" cy="234.2" r="2.2" fill="#ff1c1c"/><circle cx="108.2" cy="225.2" r="1.5" fill="#c80c0c"/><circle cx="216.6" cy="255.9" r="3.0" fill="#e41010"/><circle cx="242.4" cy="270.7" r="2.3" fill="#e81414"/><circle cx="135.5" cy="234.7" r="1.7" fill="#ff2424"/><circle cx="225.0" cy="261.3" r="2.9" fill="#f41a1a"/><circle cx="246.3" cy="257.8" r="2.7" fill="#e41010"/><circle cx="165.2" cy="234.4" r="2.7" fill="#e41010"/><circle cx="109.5" cy="226.2" r="2.5" fill="#e81414"/><circle cx="191.2" cy="229.8" r="2.7" fill="#f01818"/><circle cx="205.7" cy="240.8" r="3.0" fill="#e81414"/><circle cx="180.1" cy="246.7" r="2.2" fill="#c80c0c"/><circle cx="232.7" cy="235.1" r="1.9" fill="#e81414"/><circle cx="111.4" cy="227.7" r="1.7" fill="#ff2424"/><circle cx="157.5" cy="242.3" r="2.5" fill="#e81414"/><circle cx="271.1" cy="247.3" r="2.3" fill="#e41010"/><circle cx="169.6" cy="230.2" r="2.6" fill="#ff1c1c"/><circle cx="137.5" cy="216.4" r="2.7" fill="#ff2424"/><circle cx="163.0" cy="238.6" r="2.2" fill="#e41010"/><circle cx="221.2" cy="256.6" r="1.5" fill="#ff1c1c"/><circle cx="234.9" cy="242.2" r="1.5" fill="#ff2424"/><circle cx="223.5" cy="233.9" r="1.9" fill="#e81414"/><circle cx="224.7" cy="264.8" r="1.8" fill="#c80c0c"/><circle cx="205.5" cy="231.2" r="2.2" fill="#e81414"/><circle cx="236.6" cy="233.1" r="2.8" fill="#f01818"/><circle cx="143.4" cy="228.3" r="2.7" fill="#ff2424"/><circle cx="216.1" cy="234.9" r="1.6" fill="#e81414"/><circle cx="157.4" cy="231.3" r="2.7" fill="#c80c0c"/><circle cx="149.5" cy="229.1" r="3.0" fill="#ff2424"/><circle cx="232.6" cy="237.8" r="2.5" fill="#c80c0c"/><circle cx="166.5" cy="239.7" r="2.2" fill="#e41010"/><circle cx="230.9" cy="264.5" r="2.9" fill="#ff1c1c"/><circle cx="219.6" cy="246.1" r="1.7" fill="#e41010"/><circle cx="147.4" cy="237.1" r="2.8" fill="#ff2424"/><circle cx="188.0" cy="239.0" r="2.7" fill="#e81414"/><circle cx="160.7" cy="221.5" r="2.0" fill="#e81414"/><circle cx="244.7" cy="254.8" r="2.2" fill="#e81414"/><circle cx="252.0" cy="233.9" r="2.4" fill="#ff2424"/><circle cx="226.5" cy="236.4" r="1.6" fill="#ff2424"/><circle cx="140.0" cy="227.7" r="2.6" fill="#e81414"/><circle cx="141.8" cy="224.7" r="2.9" fill="#e41010"/><circle cx="264.4" cy="240.2" r="2.2" fill="#f01818"/><circle cx="222.0" cy="243.0" r="1.7" fill="#f41a1a"/><circle cx="187.2" cy="242.3" r="2.2" fill="#c80c0c"/><circle cx="162.7" cy="230.3" r="1.9" fill="#f01818"/><circle cx="137.2" cy="223.8" r="2.3" fill="#e81414"/><circle cx="160.3" cy="221.4" r="1.8" fill="#f01818"/><circle cx="223.8" cy="234.3" r="2.9" fill="#f41a1a"/><circle cx="245.5" cy="249.9" r="2.7" fill="#ff1c1c"/><circle cx="219.9" cy="229.3" r="2.3" fill="#ff1c1c"/><circle cx="186.2" cy="228.4" r="1.9" fill="#ff1c1c"/><circle cx="226.3" cy="248.7" r="2.5" fill="#ff1c1c"/><circle cx="270.6" cy="243.4" r="2.3" fill="#ff1c1c"/><circle cx="198.2" cy="247.8" r="2.9" fill="#f41a1a"/><circle cx="241.4" cy="244.4" r="1.6" fill="#e81414"/><circle cx="224.8" cy="250.2" r="2.9" fill="#f41a1a"/><circle cx="115.7" cy="219.9" r="1.8" fill="#f41a1a"/><circle cx="186.6" cy="246.7" r="3.0" fill="#e81414"/></g>
</svg>
<!-- /photo -->
<div class="a" style="left:347px;top:485px;width:193px;height:12.4px;background:#535353;border-radius:1px;box-shadow:0 0.5px 1.5px rgba(0,0,0,0.5)"></div>
<div class="a" style="left:348.3px;top:487px;width:1.4px;height:8.5px;background:repeating-linear-gradient(#9a9a9a 0 0.7px,transparent 0.7px 1.4px);"></div>
<div class="a" style="left:356px;top:487.5px;width:42px;height:7.4px;background:#4c4c4c;border:0.5px solid #5e5e5e;border-radius:1px"></div>
<svg style="left:358.5px;top:488.5px" width="5" height="6" viewBox="0 0 5 6"><circle cx="2.4" cy="1.5" r="1.1" fill="#ddd"/><path d="M0.3 5.3C0.3 3.6 1.2 2.9 2.4 2.9C3.6 2.9 4.5 3.6 4.5 5.3Z" fill="#ddd"/></svg>
<div class="t" style="left:367px;top:489px;font-size:5.07px;line-height:5.83px;color:#d8d8d8;transform:scaleX(0.8698);transform-origin:0 0;-webkit-text-stroke:0.08px #d8d8d8;">Select subject</div>
<div class="a" style="left:401px;top:487.5px;width:56px;height:7.4px;background:#4c4c4c;border:0.5px solid #5e5e5e;border-radius:1px"></div>
<svg style="left:403.8px;top:488.3px" width="7" height="6" viewBox="0 0 7 6"><rect x="0.3" y="0.8" width="5.4" height="4.5" fill="none" stroke="#ddd" stroke-width="0.5"/><path d="M0.5 5L2.2 3L3.5 4.2L4.6 3.2L5.6 4.5V5.2H0.5Z" fill="#ddd"/><circle cx="5.7" cy="0.9" r="1" fill="#2d8ceb"/></svg>
<div class="t" style="left:413.1px;top:489px;font-size:5.06px;line-height:5.82px;color:#d8d8d8;transform:scaleX(0.8696);transform-origin:0 0;-webkit-text-stroke:0.08px #d8d8d8;">Remove background</div>
<div class="a" style="left:460px;top:487.5px;width:41px;height:7.4px;background:#4c4c4c;border:0.5px solid #5e5e5e;border-radius:1px"></div>
<svg style="left:464px;top:488.8px" width="7" height="5" viewBox="0 0 7 5"><rect x="0.3" y="0.3" width="2.4" height="1.8" fill="#ddd"/><rect x="3.5" y="0.3" width="2.4" height="1.8" fill="#ddd"/><path d="M0.3 3.3H6M1.5 2.6V4M4.8 2.6V4" stroke="#ddd" stroke-width="0.45"/></svg>
<div class="t" style="left:472.1px;top:489px;font-size:5.13px;line-height:5.90px;color:#d8d8d8;transform:scaleX(0.8694);transform-origin:0 0;-webkit-text-stroke:0.08px #d8d8d8;">Adjust colors</div>
<svg style="left:506.5px;top:488.3px" width="6" height="6" viewBox="0 0 6 6"><path d="M1 0.5V5.5H5.5L4.5 1.8Z" fill="none" stroke="#aaa" stroke-width="0.45"/></svg>
<svg style="left:518.3px;top:488.3px" width="6" height="6" viewBox="0 0 6 6"><circle cx="2.8" cy="2.8" r="2.4" fill="#ddd"/><path d="M2.8 0.4A2.4 2.4 0 0 1 2.8 5.2Z" fill="#535353" transform="rotate(45 2.8 2.8)"/></svg>
<svg style="left:530.3px;top:490.3px" width="6" height="2" viewBox="0 0 6 2"><circle cx="0.7" cy="0.8" r="0.55" fill="#ddd"/><circle cx="2.6" cy="0.8" r="0.55" fill="#ddd"/><circle cx="4.5" cy="0.8" r="0.55" fill="#ddd"/></svg>
<div class="a" style="left:0px;top:553.4px;width:893px;height:6.3px;background:#474747;"></div>
<div class="a" style="left:0px;top:553.4px;width:86px;height:6.3px;background:#535353;"></div>
<div class="t" style="left:2.1px;top:554px;font-size:5.83px;line-height:6.70px;color:#d8d8d8;transform:scaleX(0.8696);transform-origin:0 0;-webkit-text-stroke:0.08px #d8d8d8;">16.67%</div>
<div class="t" style="left:29.9px;top:555px;font-size:4.55px;line-height:5.23px;color:#b8b8b8;transform:scaleX(0.8703);transform-origin:0 0;-webkit-text-stroke:0.08px #b8b8b8;">4096 px x 5504 px (72 ppi)</div>
<div class="a" style="left:86px;top:553.4px;width:8px;height:6.3px;background:#535353;"></div>
<svg style="left:89px;top:554.6px" width="3" height="4" viewBox="0 0 3 4"><path d="M0.5 0.3L1.9 1.9L0.5 3.5" fill="none" stroke="#cfcfcf" stroke-width="0.5"/></svg>
<svg style="left:96px;top:554.8px" width="3" height="4" viewBox="0 0 3 4"><path d="M2 0.3L0.8 1.7L2 3.1" fill="none" stroke="#7a7a7a" stroke-width="0.4"/></svg>
<div class="a" style="left:314px;top:553.6px;width:572px;height:5.8px;background:#5c5c5c;"></div>
<div class="a" style="left:886px;top:343px;width:7px;height:216.7px;background:#474747;"></div>
<div class="a" style="left:887px;top:343px;width:5px;height:50px;background:#646464;"></div>
<svg style="left:887.5px;top:548.5px" width="4" height="3" viewBox="0 0 4 3"><path d="M0.5 0.5L2 2L3.5 0.5" fill="none" stroke="#999" stroke-width="0.4"/></svg>
<svg style="left:881px;top:555px" width="3" height="4" viewBox="0 0 3 4"><path d="M0.5 0.3L1.9 1.8L0.5 3.3" fill="none" stroke="#999" stroke-width="0.4"/></svg>
<div class="a" style="left:0px;top:559.6px;width:1024px;height:16.4px;background:linear-gradient(90deg,#213a40 0%,#203642 40%,#1d2e48 75%,#1c2a49 100%);"></div>
<svg style="left:6px;top:564px" width="8" height="8" viewBox="0 0 8 8"><path d="M0 1.1L3.2 0.6V3.7H0Z M3.7 0.5L7.5 0V3.7H3.7Z M0 4.2H3.2V7.3L0 6.8Z M3.7 4.2H7.5V7.8L3.7 7.3Z" fill="#e8e8e8"/></svg>
<svg style="left:24.5px;top:563px" width="10" height="10" viewBox="0 0 10 10"><circle cx="5" cy="5" r="4.7" fill="#db4437"/><path d="M5 5L0.93 2.65A4.7 4.7 0 0 0 5 9.7Z" fill="#0f9d58"/><path d="M5 5L5 9.7A4.7 4.7 0 0 0 9.07 2.65Z" fill="#fcc934"/><circle cx="5" cy="5" r="2.2" fill="#fff"/><circle cx="5" cy="5" r="1.7" fill="#4285f4"/></svg>
<div class="a" style="left:22px;top:575px;width:16px;height:1px;background:#76b9ed;"></div>
<svg style="left:44.5px;top:564px" width="10" height="9" viewBox="0 0 10 9"><path d="M0.3 0.5H3.8L4.8 1.6H9.5V8.5H0.3Z" fill="#e8b542"/><path d="M0.3 2.6H9.5V8.5H0.3Z" fill="#f8d775"/><path d="M2.5 5.5H7.3V8.5H6.5V6.3H3.3V8.5H2.5Z" fill="#2b7fd6"/></svg>
<svg style="left:64px;top:563px" width="9" height="10" viewBox="0 0 9 10"><path d="M1 0.5H8V6.5H3.3L1 9.3Z" fill="#2fb14a"/><rect x="3" y="2.2" width="3" height="2.5" fill="#213a40"/></svg>
<div class="a" style="left:61px;top:575px;width:16px;height:1px;background:#76b9ed;"></div>
<div class="a" style="left:79px;top:559.6px;width:19px;height:16.4px;background:#3d535c;"></div>
<div class="a" style="left:84.5px;top:563.5px;width:8.5px;height:8.5px;background:#001e36;border-radius:1.2px;border:0.4px solid #0a3a5e"></div>
<div class="t" style="left:85.7px;top:566px;font-size:4.83px;line-height:5.55px;color:#31a8ff;font-weight:bold;transform:scaleX(0.8696);transform-origin:0 0;-webkit-text-stroke:0.08px #31a8ff;">Ps</div>
<div class="a" style="left:79px;top:575px;width:19px;height:1px;background:#76b9ed;"></div>
<svg style="left:966.5px;top:566px" width="6" height="4" viewBox="0 0 6 4"><path d="M0.5 3L3 0.7L5.5 3" fill="none" stroke="#ddd" stroke-width="0.6"/></svg>
<svg style="left:975px;top:564.5px" width="9" height="7" viewBox="0 0 9 7"><rect x="2.5" y="0.5" width="6" height="4.2" fill="none" stroke="#ddd" stroke-width="0.6"/><rect x="0.5" y="2" width="2.4" height="4" fill="none" stroke="#ddd" stroke-width="0.6"/><path d="M4 6.3H7" stroke="#ddd" stroke-width="0.6"/></svg>
<svg style="left:986px;top:564.8px" width="7" height="7" viewBox="0 0 7 7"><path d="M0.5 2.2H1.8L3.5 0.7V5.7L1.8 4.2H0.5Z" fill="none" stroke="#ddd" stroke-width="0.5"/><circle cx="4.7" cy="4.7" r="1.5" fill="#e81123"/><path d="M4.1 4.1L5.3 5.3M5.3 4.1L4.1 5.3" stroke="#fff" stroke-width="0.35"/></svg>
<div class="t" style="left:1002.6px;top:562px;font-size:4.71px;line-height:5.42px;color:#e8e8e8;transform:scaleX(0.8705);transform-origin:0 0;-webkit-text-stroke:0.08px #e8e8e8;">16:14</div>
<div class="t" style="left:996.2px;top:569px;font-size:4.71px;line-height:5.42px;color:#e8e8e8;transform:scaleX(0.8705);transform-origin:0 0;-webkit-text-stroke:0.08px #e8e8e8;">30/03/2026</div>
<div class="a" style="left:1022px;top:560px;width:0.7px;height:16px;background:#7a8a9a;"></div>
<div class="a" style="left:893px;top:23px;width:131px;height:536.6px;background:#444444;"></div>
<svg style="left:903.6px;top:24.4px" width="4" height="3" viewBox="0 0 4 3"><path d="M1.6 0.2L0.2 1.4L1.6 2.6ZM3.4 0.2L2 1.4L3.4 2.6Z" fill="#c0c0c0"/></svg>
<svg style="left:1018.4px;top:24.4px" width="4" height="3" viewBox="0 0 4 3"><path d="M0.2 0.2L1.6 1.4L0.2 2.6ZM2 0.2L3.4 1.4L2 2.6Z" fill="#c0c0c0"/></svg>
<div class="a" style="left:893.4px;top:28.5px;width:15.9px;height:531px;background:#535353;"></div>
<div class="a" style="left:893.4px;top:54.6px;width:15.9px;height:0.8px;background:#474747;"></div>
<div class="a" style="left:896.3px;top:33.3px;width:10.4px;height:8.5px;background:#3c3c3c;border-radius:1px"></div>
<svg style="left:898px;top:34.3px" width="8" height="7" viewBox="0 0 8 7"><rect x="0.4" y="0.4" width="1.6" height="1.6" fill="none" stroke="#ccc" stroke-width="0.4"/><rect x="0.4" y="2.6" width="1.6" height="1.6" fill="none" stroke="#ccc" stroke-width="0.4"/><rect x="0.4" y="4.8" width="1.6" height="1.6" fill="#ddd"/><path d="M3.6 0.8C5.6 0.8 6.6 2 5 3.3C6.8 4.3 5.8 6 3.8 6.2" fill="none" stroke="#ddd" stroke-width="0.7"/></svg>
<svg style="left:898.8px;top:45.5px" width="6" height="6" viewBox="0 0 6 6"><path d="M0.3 0.3H5.6V3.8H2L1 5V3.8H0.3Z" fill="#e0e0e0"/></svg>
<div class="a" style="left:799.6px;top:28.5px;width:93.8px;height:314px;background:#474747;"></div>
<div class="a" style="left:800px;top:28.9px;width:93px;height:10.800000000000004px;background:#434343;"></div>
<div class="a" style="left:800px;top:28.9px;width:21.200000000000045px;height:10.800000000000004px;background:#535353;"></div>
<div class="t" style="left:803.4px;top:32px;font-size:4.74px;line-height:5.45px;color:#f0f0f0;font-weight:bold;transform:scaleX(0.8692);transform-origin:0 0;-webkit-text-stroke:0.08px #f0f0f0;">History</div>
<div class="a" style="left:821.2px;top:28.9px;width:26.59999999999991px;height:10.800000000000004px;background:#474747;border-right:0.6px solid #3c3c3c"></div>
<div class="t" style="left:824.2px;top:32px;font-size:4.88px;line-height:5.61px;color:#b2b2b2;transform:scaleX(0.8689);transform-origin:0 0;-webkit-text-stroke:0.08px #b2b2b2;">Comments</div>
<svg style="left:877.5px;top:32.3px" width="5" height="4" viewBox="0 0 5 4"><path d="M0.3 0.3L1.6 1.8L0.3 3.3M2.4 0.3L3.7 1.8L2.4 3.3" fill="none" stroke="#a8a8a8" stroke-width="0.5"/></svg>
<div class="a" style="left:884px;top:31.5px;width:0.5px;height:5px;background:#888;"></div>
<svg style="left:887.2px;top:32.2px" width="5" height="5" viewBox="0 0 5 5"><rect x="0" y="0" width="4.2" height="4" fill="#6e6e6e"/><path d="M0 1.3H4.2M0 2.6H4.2" stroke="#434343" stroke-width="0.45"/></svg>
<div class="a" style="left:800px;top:39.7px;width:93px;height:289.7px;background:#535353;"></div>
<div class="a" style="left:892.4px;top:39.7px;width:1px;height:290px;background:#464646;"></div>
<svg style="left:801.8px;top:44.5px" width="7" height="7" viewBox="0 0 7 7"><path d="M0.5 3.3L1.7 2.5L2.2 3.2" fill="none" stroke="#ddd" stroke-width="0.5"/><path d="M1 5.8C1.1 5 1.4 4.6 2 4.6L5.6 1L6 1.4L2.4 5C2.4 5.6 2 6 1 5.8Z" fill="#e0e0e0"/></svg>
<div class="a" style="left:810.2px;top:44.6px;width:10px;height:9.5px;background:#262626;overflow:hidden"><div class="a" style="left:0;top:0;width:10px;height:4px;background:linear-gradient(#aaa,#e6e6e6)"></div><div class="a" style="left:0;top:3.8px;width:10px;height:2px;background:#777"></div><div class="a" style="left:2px;top:5.5px;width:7px;height:1.2px;background:#c01010;transform:rotate(8deg)"></div></div>
<div class="t" style="left:821.9px;top:47px;font-size:4.42px;line-height:5.08px;color:#b4b4b4;transform:scaleX(0.8846);transform-origin:0 0;-webkit-text-stroke:0.04px #b4b4b4;">IMG_3709 burned copy.jpg</div>
<div class="a" style="left:800px;top:58.6px;width:87px;height:8.4px;background:#696969;"></div>
<div class="a" style="left:802px;top:60.3px;width:4.6px;height:4.6px;background:transparent;border:0.5px solid #5c5c5c"></div>
<svg style="left:813px;top:59.6px" width="6" height="7" viewBox="0 0 6 7"><path d="M0.3 0.3H4L5.6 1.9V6.6H0.3Z" fill="#c8c8c8"/><path d="M1 2.5H4.8M1 3.6H4.8M1 4.7H4.8" stroke="#9a9a9a" stroke-width="0.4"/></svg>
<div class="t" style="left:822.9px;top:61px;font-size:4.74px;line-height:5.45px;color:#dcdcdc;transform:scaleX(0.8692);transform-origin:0 0;-webkit-text-stroke:0.04px #dcdcdc;">Open</div>
<div class="a" style="left:800px;top:329.4px;width:93px;height:9.7px;background:#535353;border-top:0.7px solid #4a4a4a"></div>
<svg style="left:852.5px;top:331.5px" width="6" height="5" viewBox="0 0 6 5"><path d="M1.5 0.5H3.5L5.5 2.5V4.5H1.5Z" fill="#e6e6e6"/><path d="M0.3 2.7L1.6 1.8V2.4H3.2V3.1H1.6V3.7Z" fill="#e6e6e6"/></svg>
<svg style="left:865.5px;top:331.8px" width="6" height="5" viewBox="0 0 6 5"><path d="M0.3 1.2H1.6L2.2 0.4H3.8L4.4 1.2H5.7V4.6H0.3Z" fill="#e6e6e6"/><circle cx="3" cy="2.8" r="0.9" fill="#535353"/></svg>
<svg style="left:878px;top:331.5px" width="5" height="6" viewBox="0 0 5 6"><path d="M0.3 0.8H4.5M1.5 0.8V0.3H3.3V0.8" stroke="#bdbdbd" stroke-width="0.5" fill="none"/><path d="M0.7 1.3H4.1V5.6H0.7Z" fill="#bdbdbd"/><path d="M1.7 1.8V5M3.1 1.8V5" stroke="#888" stroke-width="0.35"/></svg>
<div class="a" style="left:910.1px;top:28.5px;width:113.9px;height:105.1px;background:#535353;"></div>
<div class="a" style="left:910.1px;top:28.5px;width:113.89999999999998px;height:11.5px;background:#434343;"></div>
<div class="a" style="left:910.1px;top:28.5px;width:16.699999999999932px;height:11.5px;background:#535353;"></div>
<div class="t" style="left:913.3px;top:32px;font-size:4.54px;line-height:5.22px;color:#f0f0f0;font-weight:bold;transform:scaleX(0.8700);transform-origin:0 0;-webkit-text-stroke:0.08px #f0f0f0;">Color</div>
<div class="a" style="left:926.8px;top:28.5px;width:23.700000000000045px;height:11.5px;background:#474747;border-right:0.6px solid #3c3c3c"></div>
<div class="t" style="left:930.4px;top:32px;font-size:4.74px;line-height:5.45px;color:#b2b2b2;transform:scaleX(0.8692);transform-origin:0 0;-webkit-text-stroke:0.08px #b2b2b2;">Swatches</div>
<div class="a" style="left:950.5px;top:28.5px;width:25.899999999999977px;height:11.5px;background:#474747;border-right:0.6px solid #3c3c3c"></div>
<div class="t" style="left:954.8px;top:32px;font-size:4.74px;line-height:5.45px;color:#b2b2b2;transform:scaleX(0.8692);transform-origin:0 0;-webkit-text-stroke:0.08px #b2b2b2;">Gradients</div>
<div class="a" style="left:976.4px;top:28.5px;width:23.600000000000023px;height:11.5px;background:#474747;border-right:0.6px solid #3c3c3c"></div>
<div class="t" style="left:980px;top:32px;font-size:4.76px;line-height:5.47px;color:#b2b2b2;transform:scaleX(0.8697);transform-origin:0 0;-webkit-text-stroke:0.08px #b2b2b2;">Patterns</div>
<svg style="left:1017.7px;top:31.65px" width="5" height="4.2" viewBox="0 0 5 4.2"><rect x="0" y="0" width="4.2" height="4" fill="#6e6e6e"/><path d="M0 1.3H4.2M0 2.6H4.2" stroke="#434343" stroke-width="0.45"/></svg>
<div class="a" style="left:918px;top:47.7px;width:8px;height:8px;background:#000;border:0.7px solid #9a9a9a;border-radius:0.6px"></div>
<div class="a" style="left:913.8px;top:43px;width:7.7px;height:7.7px;background:#000;border:0.7px solid #9a9a9a;border-radius:0.6px"></div>
<div class="a" style="left:927.9px;top:42.2px;width:75.1px;height:85.4px;background:linear-gradient(to bottom,rgba(0,0,0,0) 0%,rgba(0,0,0,0.38) 50%,#000 100%),linear-gradient(to right,#fff,#f00 82%);"></div>
<div class="a" style="left:1001px;top:125.5px;width:3px;height:3px;background:transparent;border:0.5px solid #ccc;border-radius:50%"></div>
<div class="a" style="left:1009.5px;top:42.2px;width:7.8px;height:85.4px;background:linear-gradient(to bottom,#f00 0%,#f0f 17%,#00f 33%,#0ff 50%,#0f0 67%,#ff0 83%,#f00 100%);"></div>
<svg style="left:1006px;top:125.3px" width="3" height="4" viewBox="0 0 3 4"><path d="M0.3 0.3L2.5 1.8L0.3 3.3Z" fill="#e6e6e6"/></svg>
<div class="a" style="left:910.1px;top:136.7px;width:113.9px;height:95.5px;background:#535353;"></div>
<div class="a" style="left:910.1px;top:136.7px;width:113.89999999999998px;height:11.100000000000023px;background:#434343;"></div>
<div class="a" style="left:910.1px;top:136.7px;width:26.0px;height:11.100000000000023px;background:#535353;"></div>
<div class="t" style="left:913.8px;top:140px;font-size:4.42px;line-height:5.08px;color:#f0f0f0;font-weight:bold;transform:scaleX(0.8688);transform-origin:0 0;-webkit-text-stroke:0.08px #f0f0f0;">Properties</div>
<div class="a" style="left:936.1px;top:136.7px;width:23.199999999999932px;height:11.100000000000023px;background:#474747;border-right:0.6px solid #3c3c3c"></div>
<div class="t" style="left:940px;top:140px;font-size:4.81px;line-height:5.53px;color:#b2b2b2;transform:scaleX(0.8690);transform-origin:0 0;-webkit-text-stroke:0.08px #b2b2b2;">Libraries</div>
<div class="a" style="left:959.3px;top:136.7px;width:30.600000000000023px;height:11.100000000000023px;background:#474747;border-right:0.6px solid #3c3c3c"></div>
<div class="t" style="left:963px;top:140px;font-size:5.01px;line-height:5.76px;color:#b2b2b2;transform:scaleX(0.8703);transform-origin:0 0;-webkit-text-stroke:0.08px #b2b2b2;">Adjustments</div>
<svg style="left:1017.7px;top:139.65px" width="5" height="4.2" viewBox="0 0 5 4.2"><rect x="0" y="0" width="4.2" height="4" fill="#6e6e6e"/><path d="M0 1.3H4.2M0 2.6H4.2" stroke="#434343" stroke-width="0.45"/></svg>
<div class="a" style="left:914.7px;top:151px;width:8.1px;height:8.2px;background:#3a3a3a;border-radius:0.8px"></div>
<svg style="left:916.4px;top:152.2px" width="5" height="6" viewBox="0 0 5 6"><path d="M0.3 0.3H2.8L4.6 2.1V5.6H0.3Z M2.8 0.3V2.1H4.6" fill="none" stroke="#ddd" stroke-width="0.5"/></svg>
<div class="t" style="left:925.2px;top:154px;font-size:4.74px;line-height:5.45px;color:#c6c6c6;transform:scaleX(0.8692);transform-origin:0 0;-webkit-text-stroke:0.08px #c6c6c6;">Document</div>
<div class="a" style="left:910.1px;top:160.8px;width:113.9px;height:0.7px;background:#4a4a4a;"></div>
<svg style="left:912.7px;top:167px" width="4" height="3" viewBox="0 0 4 3"><path d="M0.3 0.4L1.8 1.9L3.3 0.4" fill="none" stroke="#bbb" stroke-width="0.5"/></svg>
<div class="t" style="left:918.9px;top:167px;font-size:4.65px;line-height:5.35px;color:#dedede;font-weight:bold;transform:scaleX(0.8688);transform-origin:0 0;-webkit-text-stroke:0.08px #dedede;">Canvas</div>
<div class="t" style="left:930.7px;top:176px;font-size:4.6px;line-height:5.29px;color:#b8b8b8;transform:scaleX(0.8696);transform-origin:0 0;-webkit-text-stroke:0.08px #b8b8b8;">W</div>
<div class="a" style="left:937.1px;top:174.8px;width:20.8px;height:5.9px;background:#474747;"></div>
<div class="t" style="left:939px;top:176px;font-size:4.42px;line-height:5.08px;color:#d8d8d8;transform:scaleX(0.7919);transform-origin:0 0;-webkit-text-stroke:0.08px #d8d8d8;">4096 px</div>
<div class="t" style="left:964px;top:176px;font-size:4.6px;line-height:5.29px;color:#b8b8b8;transform:scaleX(0.8696);transform-origin:0 0;-webkit-text-stroke:0.08px #b8b8b8;">X</div>
<div class="a" style="left:970px;top:174.8px;width:20px;height:5.9px;background:#4e4e4e;"></div>
<div class="t" style="left:971px;top:176px;font-size:4.42px;line-height:5.08px;color:#6c6c6c;transform:scaleX(0.7919);transform-origin:0 0;-webkit-text-stroke:0.08px #6c6c6c;">0 px</div>
<div class="t" style="left:931.3px;top:186px;font-size:4.6px;line-height:5.29px;color:#b8b8b8;transform:scaleX(0.8696);transform-origin:0 0;-webkit-text-stroke:0.08px #b8b8b8;">H</div>
<div class="a" style="left:937.1px;top:184.8px;width:20.8px;height:6.1px;background:#474747;"></div>
<div class="t" style="left:939px;top:186px;font-size:4.42px;line-height:5.08px;color:#d8d8d8;transform:scaleX(0.7919);transform-origin:0 0;-webkit-text-stroke:0.08px #d8d8d8;">5504 px</div>
<div class="t" style="left:964px;top:186px;font-size:4.6px;line-height:5.29px;color:#b8b8b8;transform:scaleX(0.8696);transform-origin:0 0;-webkit-text-stroke:0.08px #b8b8b8;">Y</div>
<div class="a" style="left:970px;top:184.8px;width:20px;height:6.1px;background:#4e4e4e;"></div>
<div class="t" style="left:971px;top:186px;font-size:4.42px;line-height:5.08px;color:#6c6c6c;transform:scaleX(0.7919);transform-origin:0 0;-webkit-text-stroke:0.08px #6c6c6c;">0 px</div>
<svg style="left:917.4px;top:179.5px" width="4" height="7" viewBox="0 0 4 7"><path d="M1.8 0.3C0.5 0.3 0.5 3 1.8 3C3.1 3 3.1 0.3 1.8 0.3M1.8 3.6C0.5 3.6 0.5 6.3 1.8 6.3C3.1 6.3 3.1 3.6 1.8 3.6" fill="none" stroke="#ccc" stroke-width="0.5"/></svg>
<div class="a" style="left:937.5px;top:196px;width:9.1px;height:8.9px;background:#3a3a3a;border-radius:0.6px"></div>
<svg style="left:939.3px;top:197.3px" width="6" height="7" viewBox="0 0 6 7"><rect x="0.3" y="0.3" width="5" height="6" fill="none" stroke="#ddd" stroke-width="0.5"/><rect x="2" y="1.5" width="1.7" height="1.5" fill="#ddd"/><path d="M1.3 5.5L2.2 3.5H3.4L4.3 5.5Z" fill="#ddd"/></svg>
<svg style="left:948.7px;top:197.8px" width="8" height="6" viewBox="0 0 8 6"><rect x="0.3" y="0.3" width="6.6" height="5" fill="none" stroke="#ddd" stroke-width="0.5"/><rect x="2.9" y="1.2" width="1.5" height="1.4" fill="#ddd"/><path d="M1.8 4.6L2.9 2.9H4.3L5.4 4.6Z" fill="#ddd"/></svg>
<div class="t" style="left:936.9px;top:210px;font-size:4.6px;line-height:5.29px;color:#c6c6c6;transform:scaleX(0.8696);transform-origin:0 0;-webkit-text-stroke:0.08px #c6c6c6;">Resolution: 72 pixels/inch</div>
<div class="t" style="left:923.9px;top:220px;font-size:4.78px;line-height:5.50px;color:#c6c6c6;transform:scaleX(0.8703);transform-origin:0 0;-webkit-text-stroke:0.08px #c6c6c6;">Mode</div>
<div class="a" style="left:1018px;top:165px;width:5px;height:60px;background:#4c4c4c;"></div>
<div class="a" style="left:1018.6px;top:170px;width:3.8px;height:17px;background:#6a6a6a;"></div>
<svg style="left:1019px;top:165.5px" width="4" height="3" viewBox="0 0 4 3"><path d="M0.3 2L1.8 0.5L3.3 2" fill="none" stroke="#888" stroke-width="0.4"/></svg>
<svg style="left:1019px;top:221.5px" width="4" height="3" viewBox="0 0 4 3"><path d="M0.3 0.5L1.8 2L3.3 0.5" fill="none" stroke="#888" stroke-width="0.4"/></svg>
<div class="a" style="left:910.1px;top:235.7px;width:113.9px;height:324px;background:#535353;"></div>
<div class="a" style="left:910.1px;top:235.7px;width:113.89999999999998px;height:11.600000000000023px;background:#434343;"></div>
<div class="a" style="left:910.1px;top:235.7px;width:19.199999999999932px;height:11.600000000000023px;background:#535353;"></div>
<div class="t" style="left:913.5px;top:239px;font-size:4.42px;line-height:5.08px;color:#f0f0f0;font-weight:bold;transform:scaleX(0.8371);transform-origin:0 0;-webkit-text-stroke:0.08px #f0f0f0;">Layers</div>
<div class="a" style="left:929.3px;top:235.7px;width:23.5px;height:11.600000000000023px;background:#474747;border-right:0.6px solid #3c3c3c"></div>
<div class="t" style="left:931.9px;top:239px;font-size:4.74px;line-height:5.45px;color:#b2b2b2;transform:scaleX(0.8692);transform-origin:0 0;-webkit-text-stroke:0.08px #b2b2b2;">Channels</div>
<div class="a" style="left:952.8px;top:235.7px;width:17.600000000000023px;height:11.600000000000023px;background:#474747;border-right:0.6px solid #3c3c3c"></div>
<div class="t" style="left:956px;top:239px;font-size:4.81px;line-height:5.53px;color:#b2b2b2;transform:scaleX(0.8690);transform-origin:0 0;-webkit-text-stroke:0.08px #b2b2b2;">Paths</div>
<svg style="left:1017.7px;top:238.9px" width="5" height="4.2" viewBox="0 0 5 4.2"><rect x="0" y="0" width="4.2" height="4" fill="#6e6e6e"/><path d="M0 1.3H4.2M0 2.6H4.2" stroke="#434343" stroke-width="0.45"/></svg>
<div class="a" style="left:912.4px;top:251.5px;width:33.4px;height:7.9px;background:#4c4c4c;border:0.5px solid #4a4a4a"></div>
<svg style="left:914.6px;top:253px" width="5" height="5" viewBox="0 0 5 5"><circle cx="2" cy="2" r="1.5" fill="none" stroke="#c8c8c8" stroke-width="0.5"/><path d="M3 3L4.5 4.5" stroke="#c8c8c8" stroke-width="0.6"/></svg>
<div class="t" style="left:921px;top:254px;font-size:4.6px;line-height:5.29px;color:#7c7c7c;transform:scaleX(0.8696);transform-origin:0 0;-webkit-text-stroke:0.08px #7c7c7c;">Kind</div>
<svg style="left:942px;top:254.8px" width="3" height="2" viewBox="0 0 3 2"><path d="M0.3 0.3L1.4 1.5L2.5 0.3" fill="none" stroke="#777" stroke-width="0.4"/></svg>
<svg style="left:950.5px;top:252.2px" width="6" height="5" viewBox="0 0 6 5"><rect x="0.3" y="0.3" width="5" height="4" fill="none" stroke="#bbb" stroke-width="0.5"/><path d="M0.5 4L2 2.5L3.5 3.7L5 2.2" fill="none" stroke="#bbb" stroke-width="0.45"/></svg>
<svg style="left:960.4px;top:252.2px" width="6" height="6" viewBox="0 0 6 6"><circle cx="2.5" cy="2.5" r="2.1" fill="none" stroke="#bbb" stroke-width="0.5"/><path d="M2.5 0.4A2.1 2.1 0 0 1 2.5 4.6Z" fill="#bbb"/></svg>
<svg style="left:971px;top:252.1px" width="6" height="6" viewBox="0 0 6 6"><path d="M0.3 0.3H5V1.5H4.4V1H3.1V4.6H3.8V5.2H1.5V4.6H2.2V1H0.9V1.5H0.3Z" fill="#bbb"/></svg>
<svg style="left:979.8px;top:252.1px" width="6" height="6" viewBox="0 0 6 6"><rect x="0.9" y="0.9" width="3.8" height="3.8" fill="none" stroke="#bbb" stroke-width="0.5"/><path d="M0 0.9H5.6M0 4.7H5.6M0.9 0V5.6M4.7 0V5.6" stroke="#bbb" stroke-width="0.35"/></svg>
<svg style="left:989.6px;top:252.1px" width="6" height="6" viewBox="0 0 6 6"><rect x="1.8" y="0.4" width="3.5" height="3.5" rx="0.8" fill="none" stroke="#bbb" stroke-width="0.5"/><rect x="0.4" y="1.9" width="3.5" height="3.5" fill="#bbb"/></svg>
<div class="a" style="left:999px;top:250.6px;width:3px;height:3px;background:#dcdcdc;border-radius:50%"></div>
<div class="a" style="left:1000.2px;top:253.4px;width:0.6px;height:3px;background:#666;"></div>
<div class="a" style="left:910.1px;top:260.7px;width:113.9px;height:0.6px;background:#4c4c4c;"></div>
<div class="a" style="left:912.4px;top:262.8px;width:50px;height:8.4px;background:#4c4c4c;border:0.5px solid #4a4a4a"></div>
<div class="t" style="left:914.7px;top:265px;font-size:4.46px;line-height:5.13px;color:#7c7c7c;transform:scaleX(0.8700);transform-origin:0 0;-webkit-text-stroke:0.08px #7c7c7c;">Normal</div>
<svg style="left:957.5px;top:266px" width="3" height="2" viewBox="0 0 3 2"><path d="M0.3 0.3L1.4 1.5L2.5 0.3" fill="none" stroke="#777" stroke-width="0.4"/></svg>
<div class="t" style="left:965.7px;top:265px;font-size:4.48px;line-height:5.15px;color:#7a7a7a;transform:scaleX(0.8705);transform-origin:0 0;-webkit-text-stroke:0.08px #7a7a7a;">Opacity:</div>
<div class="a" style="left:982.4px;top:263.2px;width:13.6px;height:6px;background:#4a4a4a;border:0.5px solid #474747"></div>
<div class="t" style="left:984.3px;top:264px;font-size:4.42px;line-height:5.08px;color:#6a6a6a;transform:scaleX(0.8145);transform-origin:0 0;-webkit-text-stroke:0.08px #6a6a6a;">100%</div>
<div class="a" style="left:997.4px;top:263.2px;width:4.6px;height:6px;background:#4c4c4c;"></div>
<svg style="left:998.3px;top:265.8px" width="3" height="2" viewBox="0 0 3 2"><path d="M0.3 0.3L1.4 1.5L2.5 0.3" fill="none" stroke="#6a6a6a" stroke-width="0.4"/></svg>
<div class="a" style="left:910.1px;top:272.2px;width:113.9px;height:0.6px;background:#4c4c4c;"></div>
<div class="t" style="left:912px;top:276px;font-size:4.81px;line-height:5.53px;color:#7a7a7a;transform:scaleX(0.8690);transform-origin:0 0;-webkit-text-stroke:0.08px #7a7a7a;">Lock:</div>
<svg style="left:925px;top:275px" width="6" height="6" viewBox="0 0 6 6"><rect x="0.8" y="0.8" width="4" height="4" fill="none" stroke="#9a9a9a" stroke-width="0.5" stroke-dasharray="0.6 0.4"/><circle cx="2.8" cy="2.8" r="1" fill="#9a9a9a"/></svg>
<svg style="left:934px;top:275px" width="6" height="6" viewBox="0 0 6 6"><path d="M0.4 5.5C0.5 4.8 0.8 4.5 1.3 4.5L5 0.5L5.4 0.9L1.7 4.9C1.7 5.3 1.3 5.7 0.4 5.5Z" fill="#9a9a9a"/></svg>
<svg style="left:942.6px;top:274.7px" width="6" height="6" viewBox="0 0 6 6"><path d="M2.8 0.2L3.6 1.1H3.1V2.5H4.5V2L5.4 2.8L4.5 3.6V3.1H3.1V4.5H3.6L2.8 5.4L2 4.5H2.5V3.1H1.1V3.6L0.2 2.8L1.1 2V2.5H2.5V1.1H2Z" fill="#9a9a9a"/></svg>
<svg style="left:951.5px;top:275px" width="6" height="6" viewBox="0 0 6 6"><rect x="0.9" y="0.9" width="3.8" height="3.8" fill="none" stroke="#9a9a9a" stroke-width="0.5"/><path d="M0 0.9H1.5M0.9 0V1.5M5.6 4.7H4.1M4.7 5.6V4.1" stroke="#9a9a9a" stroke-width="0.4"/></svg>
<svg style="left:960.2px;top:274.8px" width="6" height="6" viewBox="0 0 6 6"><path d="M1.5 2.5V1.5C1.5 0.3 4.1 0.3 4.1 1.5V2.5" fill="none" stroke="#9a9a9a" stroke-width="0.5"/><rect x="0.8" y="2.4" width="4" height="3" fill="#9a9a9a"/></svg>
<div class="t" style="left:974px;top:276px;font-size:4.43px;line-height:5.09px;color:#7a7a7a;transform:scaleX(0.8691);transform-origin:0 0;-webkit-text-stroke:0.08px #7a7a7a;">Fill:</div>
<div class="a" style="left:982.4px;top:274.3px;width:13.6px;height:6px;background:#4a4a4a;border:0.5px solid #474747"></div>
<div class="t" style="left:984.3px;top:276px;font-size:4.42px;line-height:5.08px;color:#6a6a6a;transform:scaleX(0.8145);transform-origin:0 0;-webkit-text-stroke:0.08px #6a6a6a;">100%</div>
<div class="a" style="left:997.4px;top:274.3px;width:4.6px;height:6px;background:#4c4c4c;"></div>
<svg style="left:998.3px;top:276.9px" width="3" height="2" viewBox="0 0 3 2"><path d="M0.3 0.3L1.4 1.5L2.5 0.3" fill="none" stroke="#6a6a6a" stroke-width="0.4"/></svg>
<div class="a" style="left:910.1px;top:283.1px;width:113.9px;height:0.6px;background:#4c4c4c;"></div>
<div class="a" style="left:922.3px;top:283.4px;width:94.5px;height:16.4px;background:#6a6a6a;"></div>
<svg style="left:913.4px;top:290.5px" width="6" height="4" viewBox="0 0 6 4"><path d="M0.3 1.8C1.8 -0.2 4.2 -0.2 5.7 1.8C4.2 3.8 1.8 3.8 0.3 1.8Z" fill="#eee"/><circle cx="3" cy="1.8" r="0.8" fill="#535353"/></svg>
<div class="a" style="left:923.75px;top:285.4px;width:10px;height:12.5px;background:#2e2e2e;border:0.5px solid #8a8a8a;overflow:hidden"><div class="a" style="left:0;top:0;width:10px;height:3.4px;background:linear-gradient(#c4c4c4,#dedede)"></div><div class="a" style="left:0;top:3.4px;width:10px;height:3px;background:#aaa"></div><div class="a" style="left:2.5px;top:4.6px;width:4px;height:3px;background:#444"></div><div class="a" style="left:0;top:6.8px;width:10px;height:6px;background:#3a3a3a"></div><div class="a" style="left:3.5px;top:7.6px;width:6px;height:1.6px;background:#d01010;transform:rotate(12deg)"></div></div>
<div class="t" style="left:937.4px;top:290px;font-size:4.71px;line-height:5.42px;color:#e8e8e8;font-style:italic;transform:scaleX(0.8705);transform-origin:0 0;-webkit-text-stroke:0.08px #e8e8e8;">Background</div>
<svg style="left:1005.6px;top:289px" width="6" height="7" viewBox="0 0 6 7"><path d="M1.5 2.8V1.8C1.5 0.4 4.3 0.4 4.3 1.8V2.8" fill="none" stroke="#e6e6e6" stroke-width="0.55"/><rect x="0.7" y="2.7" width="4.4" height="3.6" fill="#e6e6e6"/><rect x="2.6" y="3.6" width="0.7" height="1.5" fill="#6a6a6a"/></svg>
<div class="a" style="left:910.1px;top:549.6px;width:113.9px;height:10px;background:#535353;border-top:0.6px solid #4c4c4c"></div>
<svg style="left:942.5px;top:552.2px" width="7" height="5" viewBox="0 0 7 5"><path d="M2.2 0.6H1.6A1.6 1.6 0 0 0 1.6 3.8H2.2M4.4 0.6H5A1.6 1.6 0 0 1 5 3.8H4.4M2.2 2.2H4.4" fill="none" stroke="#9a9a9a" stroke-width="0.5"/></svg>
<div class="t" style="left:953.8px;top:553px;font-size:4.48px;line-height:5.15px;color:#9a9a9a;font-style:italic;transform:scaleX(0.8705);transform-origin:0 0;-webkit-text-stroke:0.08px #9a9a9a;">fx</div>
<svg style="left:963.8px;top:551.8px" width="7" height="6" viewBox="0 0 7 6"><rect x="0.3" y="0.3" width="5.8" height="4.8" fill="#e6e6e6"/><circle cx="3.2" cy="2.7" r="1.4" fill="#535353"/></svg>
<svg style="left:975.2px;top:551.6px" width="7" height="7" viewBox="0 0 7 7"><circle cx="2.8" cy="2.8" r="2.3" fill="none" stroke="#e6e6e6" stroke-width="0.6"/><path d="M2.8 0.5A2.3 2.3 0 0 1 2.8 5.1Z" fill="#e6e6e6"/><circle cx="5" cy="5.4" r="0.45" fill="#e6e6e6"/></svg>
<svg style="left:985.6px;top:552px" width="7" height="6" viewBox="0 0 7 6"><path d="M0.3 0.5H2.6L3.3 1.3H5.9V4.9H0.3Z" fill="#e6e6e6"/></svg>
<svg style="left:996.6px;top:551.7px" width="7" height="6" viewBox="0 0 7 6"><rect x="0.4" y="0.4" width="5.4" height="4.8" fill="none" stroke="#e6e6e6" stroke-width="0.55"/><path d="M2.8 1.5L4 2.8L2.8 4M1.3 2.8H4" fill="none" stroke="#e6e6e6" stroke-width="0.45"/></svg>
<svg style="left:1007.8px;top:551.6px" width="5" height="6" viewBox="0 0 5 6"><path d="M0.3 0.8H4.5M1.5 0.8V0.3H3.3V0.8" stroke="#8a8a8a" stroke-width="0.5" fill="none"/><path d="M0.7 1.3H4.1V5.6H0.7Z" fill="#8a8a8a"/><path d="M1.7 1.8V5M3.1 1.8V5" stroke="#535353" stroke-width="0.35"/></svg>
</body></html>
